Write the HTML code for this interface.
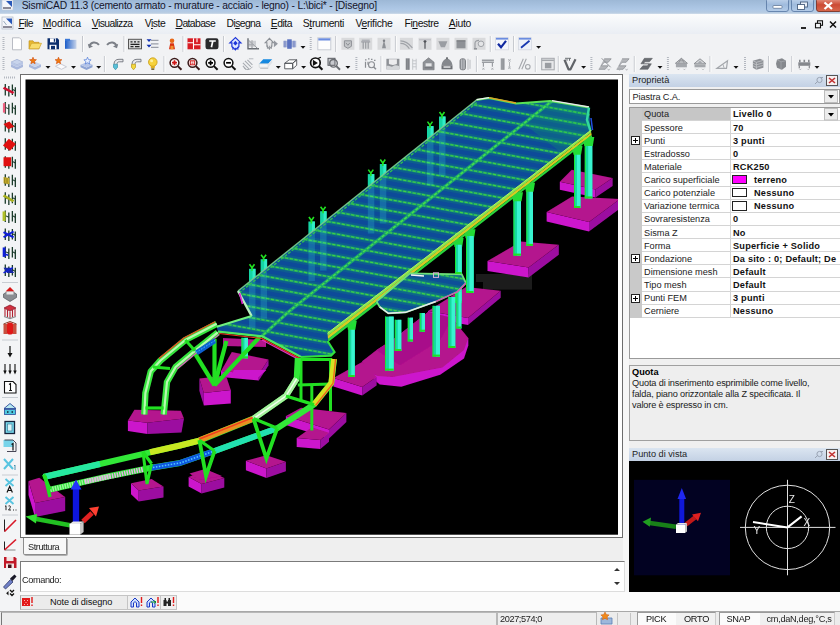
<!DOCTYPE html><html><head><meta charset="utf-8"><title>SismiCAD</title><style>
html,body{margin:0;padding:0;}
body{width:840px;height:625px;overflow:hidden;background:#f0f0f0;position:relative;font-family:"Liberation Sans",sans-serif;color:#000;}
.abs{position:absolute;}
.t{position:absolute;white-space:pre;line-height:1;}
#title{left:0;top:0;width:840px;height:13.5px;background:linear-gradient(#9db8d6 0%,#aec8e6 65%,#b6cbe2 88%,#cfdcea 100%);}
#menubar{left:0;top:13.5px;width:840px;height:21px;background:linear-gradient(#fbfcfd,#e9edf3);}
.m{position:absolute;top:19.2px;font-size:10.4px;white-space:pre;line-height:1;color:#111;}
.m u{text-decoration:underline;}
#tb{left:0;top:34px;width:840px;height:41px;background:#f1f2f4;}
#left{left:0;top:75px;width:20px;height:536px;background:#f3f4f6;}
#vp{left:20px;top:74px;width:603px;height:464px;background:#fff;border:1px solid #6d6d6d;box-sizing:border-box;}
#vpb{left:25.5px;top:79.5px;width:592.5px;height:555px;}
.pg{font-size:9.2px;}
</style></head><body>
<div id="title" class="abs"></div>
<div id="menubar" class="abs"></div>
<div class="t" style="left:21.7px;top:0.6px;font-size:10.3px;color:#14142a;letter-spacing:-0.202px">SismiCAD 11.3 (cemento armato - murature - acciaio - legno) - L:\bici* - [Disegno]</div>
<svg class="abs" style="left:0;top:0" width="840" height="34" viewBox="0 0 840 34"><rect x="2" y="0" width="11" height="10" fill="#f4f6fa" stroke="#c0c8d4" stroke-width="0.6"/><path d="M6 1h6v6z" fill="#2858b8"/><path d="M3 8h8" stroke="#445" stroke-width="1.2"/><rect x="2" y="17" width="11" height="12" fill="#f4f6fa" stroke="#b0b8c4" stroke-width="0.7"/><path d="M6 18.500h6v6z" fill="#2858b8"/><path d="M3.500 21l3 4" stroke="#9ab" stroke-width="1"/><path d="M3 27h9" stroke="#445" stroke-width="1.200"/><defs><linearGradient id="wb" x1="0" y1="0" x2="0" y2="1"><stop offset="0" stop-color="#c4d6ec"/><stop offset="0.5" stop-color="#9fbbdd"/><stop offset="1" stop-color="#b4cce8"/></linearGradient><linearGradient id="wc" x1="0" y1="0" x2="0" y2="1"><stop offset="0" stop-color="#e8a090"/><stop offset="0.5" stop-color="#cc4a34"/><stop offset="1" stop-color="#d8684c"/></linearGradient></defs><rect x="766.500" y="-2" width="22" height="13.500" rx="2.500" fill="url(#wb)" stroke="#5f7ea8" stroke-width="0.9"/><rect x="791.500" y="-2" width="22" height="13.500" rx="2.500" fill="url(#wb)" stroke="#5f7ea8" stroke-width="0.9"/><rect x="816.500" y="-2" width="25" height="13.500" rx="2.500" fill="url(#wc)" stroke="#7a3428" stroke-width="0.9"/><rect x="773" y="5.500" width="9" height="2.800" rx="0.800" fill="#fff" stroke="#556b8c" stroke-width="0.7"/><rect x="800.500" y="2" width="7" height="5" fill="#e8eef8" stroke="#4a607f" stroke-width="0.9"/><rect x="797.500" y="4.500" width="7" height="5" fill="#fff" stroke="#4a607f" stroke-width="0.9"/><path d="M824.500 2.500l7.500 6.500M832 2.500l-7.500 6.500" stroke="#fff" stroke-width="2.300"/><path d="M801 28h5" stroke="#111" stroke-width="1.800"/><rect x="817.500" y="20.800" width="5" height="4.500" fill="none" stroke="#111" stroke-width="1.100"/><rect x="815.500" y="23.300" width="5" height="4.500" fill="#f4f6f8" stroke="#111" stroke-width="1.100"/><path d="M830 21.500l6 6M836 21.500l-6 6" stroke="#111" stroke-width="1.500"/></svg>
<div class="m" style="left:18.4px;letter-spacing:-0.51px"><u>F</u>ile</div>
<div class="m" style="left:42.7px;letter-spacing:-0.04px"><u>M</u>odifica</div>
<div class="m" style="left:91.8px;letter-spacing:-0.59px"><u>V</u>isualizza</div>
<div class="m" style="left:144.8px;letter-spacing:-0.51px">V<u>i</u>ste</div>
<div class="m" style="left:175.5px;letter-spacing:-0.61px"><u>D</u>atabase</div>
<div class="m" style="left:226.6px;letter-spacing:-0.62px">Di<u>s</u>egna</div>
<div class="m" style="left:270.8px;letter-spacing:-0.50px"><u>E</u>dita</div>
<div class="m" style="left:302.8px;letter-spacing:-0.37px">S<u>t</u>rumenti</div>
<div class="m" style="left:355.4px;letter-spacing:-0.30px">V<u>e</u>rifiche</div>
<div class="m" style="left:404.6px;letter-spacing:-0.46px">Fi<u>n</u>estre</div>
<div class="m" style="left:448.8px;letter-spacing:-0.30px"><u>A</u>iuto</div>
<div id="tb" class="abs"></div>
<svg class="abs" style="left:0;top:0" width="840" height="78" viewBox="0 0 840 78"><path d="M3.5 37V51" stroke="#b4b8c0" stroke-width="2" stroke-dasharray="1 1"/><g transform="translate(10.0,36.8)"><path d="M2.5 1h7l2 2v10h-9z" fill="#fff" stroke="#b9bcc4" stroke-width="1"/></g><g transform="translate(28.0,36.8)"><path d="M1 4h4l1 1.500h5V12H1z" fill="#e8b830" stroke="#b88a18" stroke-width="0.6"/><path d="M1 12l2.500-5.500h10L11 12z" fill="#f8dc6c" stroke="#c89a20" stroke-width="0.6"/></g><g transform="translate(46.0,36.8)"><path d="M1.500 1.500h10l1.500 1.500v9.500h-11.500z" fill="#0c2f6e"/><rect x="4" y="1.500" width="6" height="4" fill="#fff"/><rect x="7.800" y="2" width="1.400" height="3" fill="#0c2f6e"/><rect x="3.500" y="8" width="7" height="4.500" fill="#fff"/><rect x="5" y="9" width="4" height="3.500" fill="#0c2f6e"/></g><g transform="translate(63.5,36.8)"><defs><linearGradient id="gs" x1="0" x2="1"><stop offset="0" stop-color="#1a5cc8"/><stop offset="1" stop-color="#c8d4ea"/></linearGradient></defs><rect x="1.500" y="3" width="11.500" height="9" fill="url(#gs)"/><rect x="1.500" y="2" width="5" height="2" fill="#3a78d8"/></g><path d="M82.5 36V52" stroke="#c3c6cc" stroke-width="1"/><path d="M83.5 36V52" stroke="#fcfcfc" stroke-width="1"/><g transform="translate(87.0,36.8)"><path d="M2.500 9.500C3.500 5 9 4.500 12 8" fill="none" stroke="#7c8088" stroke-width="2"/><path d="M0.800 7l1.200 4.500 4-1.800z" fill="#7c8088"/></g><g transform="translate(105.0,36.8)"><path d="M11.500 9.500C10.500 5 5 4.500 2 8" fill="none" stroke="#7c8088" stroke-width="2"/><path d="M13.200 7l-1.200 4.500-4-1.800z" fill="#7c8088"/></g><path d="M124 36V52" stroke="#c3c6cc" stroke-width="1"/><path d="M125 36V52" stroke="#fcfcfc" stroke-width="1"/><g transform="translate(128.0,36.8)"><rect x="0.500" y="2.500" width="13" height="9.500" fill="#d8d8d8" stroke="#555" stroke-width="1"/><path d="M2.500 5h2M6 5h2M9.500 5h2M2.500 7.500h9M2.500 9.800h3M7 9.800h4.500" stroke="#222" stroke-width="1.300"/></g><g transform="translate(145.5,36.8)"><path d="M5.500 3.500h7.500M5.500 7h7.500M5.500 10.500h7.500" stroke="#9a9ea8" stroke-width="1.200"/><path d="M1 2.500h5l-2.500 2.600z M1 8h5l-2.500 2.600z" fill="#1030b0"/></g><g transform="translate(165.0,36.8)"><path d="M4 12.500l1.200-6h3.600l1.200 6z" fill="#d83010"/><circle cx="7" cy="4" r="2.300" fill="#e86818"/><path d="M5.500 9h3v3.500h-3z" fill="#f09030"/></g><path d="M183 36V52" stroke="#c3c6cc" stroke-width="1"/><path d="M184 36V52" stroke="#fcfcfc" stroke-width="1"/><g transform="translate(187.0,36.8)"><rect x="0.500" y="1.500" width="13" height="11" fill="#d81c24"/><path d="M6.500 1.500v11M0.500 6h6M7 8h6.500M10 1.500v4" stroke="#fff" stroke-width="1.100"/></g><g transform="translate(205.0,36.8)"><rect x="0.500" y="1.500" width="13" height="11" rx="2.200" fill="#2a2a2c"/><path d="M4.200 4.200h6.600M7.800 4.200L6.400 10.500" stroke="#fff" stroke-width="1.700" fill="none"/></g><path d="M223.6 36V52" stroke="#c3c6cc" stroke-width="1"/><path d="M224.6 36V52" stroke="#fcfcfc" stroke-width="1"/><g transform="translate(228.4,36.8)"><path d="M7 0.800L1.500 6l2 0V10l3.500 3 3.500-3V6h2z" fill="#dfe8ff" stroke="#1c34d8" stroke-width="1.200"/><path d="M7 4l-2.200 2.400L7 8.800l2.200-2.400z" fill="#1c34d8"/><path d="M4.500 10v3M7 11v2.500M9.500 10v3" stroke="#1c34d8" stroke-width="1"/></g><g transform="translate(246.0,36.8)"><path d="M2 1.500V12h11" fill="none" stroke="#6a6e74" stroke-width="1.400"/><path d="M2 3l9.500 8.500M2 8h6M6 3.500v8" stroke="#8a8e94" stroke-width="1"/><rect x="3" y="4" width="7" height="6" fill="#b5b8bd" opacity="0.600"/></g><g transform="translate(264.4,36.8)"><path d="M5 1.500L0.800 6h1.700v3.500L5 12l2.500-2.500V6h1.700z" fill="#e8e8ea" stroke="#8c9096" stroke-width="1.100"/><path d="M5 9v4M3 8.500v3.500M7 8.500v3.500" stroke="#8c9096" stroke-width="0.900"/><path d="M9.500 3.500l4 3.500-4 3.500z" fill="#9498a0"/></g><g transform="translate(282.7,36.8)"><rect x="0.500" y="4" width="13" height="6.500" fill="#a9b4d8"/><rect x="4.500" y="2.500" width="4.500" height="9.500" fill="#5a72c0"/><rect x="1.500" y="4" width="1.500" height="6.500" fill="#8090c8"/><rect x="10.500" y="4" width="1.500" height="6.500" fill="#8090c8"/></g><path d="M300.5 46h5l-2.5 2.8z" fill="#111"/><path d="M310.7 37V51" stroke="#b4b8c0" stroke-width="2" stroke-dasharray="1 1"/><g transform="translate(317.3,36.8)"><rect x="0.500" y="1" width="13" height="12" fill="#fdfdfd" stroke="#c8ccd4" stroke-width="1"/><rect x="1" y="1.500" width="12" height="2.200" fill="#6a8ce0"/></g><path d="M335.7 36V52" stroke="#c3c6cc" stroke-width="1"/><path d="M336.7 36V52" stroke="#fcfcfc" stroke-width="1"/><g transform="translate(340.9,36.8)"><rect x="0.500" y="1" width="13" height="12" fill="#d9dadc"/><path d="M3.500 4h7v5.500L7 11.500 3.500 9.500z" fill="#c4c6c9" stroke="#8e9196" stroke-width="1"/><path d="M5 6l2 2.500L9 6" stroke="#8e9196" fill="none"/></g><g transform="translate(358.7,36.8)"><rect x="0.500" y="1" width="13" height="12" fill="#d9dadc"/><path d="M2.500 5h9M4.500 5v7M9.500 5v7M7 5v7" stroke="#9a9da2" stroke-width="1.200"/><path d="M3 3.500h8" stroke="#aeb1b6" stroke-width="1.500"/></g><g transform="translate(377.0,36.8)"><rect x="0.500" y="1" width="13" height="12" fill="#d9dadc"/><path d="M7 3l-2 8.500h4z" fill="#8e9196"/><circle cx="7" cy="4" r="1.200" fill="#7e8186"/></g><path d="M395.4 36V52" stroke="#c3c6cc" stroke-width="1"/><path d="M396.4 36V52" stroke="#fcfcfc" stroke-width="1"/><g transform="translate(399.4,36.8)"><rect x="0.500" y="1" width="13" height="12" fill="#d9dadc"/><path d="M1 4c5 0 8 2 12 7M1 6.500c4 0 7 2 9 5.500" stroke="#a0a3a8" stroke-width="1.200" fill="none"/></g><g transform="translate(418.0,36.8)"><rect x="0.500" y="1" width="13" height="12" fill="#d9dadc"/><path d="M7 4v8" stroke="#505358" stroke-width="1.200"/><circle cx="7" cy="4.500" r="1.400" fill="#505358"/><path d="M1 3h12" stroke="#bbbdc2" stroke-width="1"/></g><g transform="translate(435.9,36.8)"><rect x="0.500" y="1" width="13" height="12" fill="#d9dadc"/><path d="M2.500 4.500h9L9 10.500H5z" fill="#9a9da2"/></g><g transform="translate(454.0,36.8)"><rect x="0.500" y="1" width="13" height="12" fill="#d9dadc"/><rect x="2.500" y="4" width="9" height="7.500" fill="#8e9196"/><path d="M2.500 4h9" stroke="#6e7176" stroke-width="1"/></g><g transform="translate(472.0,36.8)"><rect x="0.500" y="1" width="13" height="12" fill="#d9dadc"/><circle cx="9" cy="7" r="2.800" fill="#e4e5e7" stroke="#a0a3a8"/><path d="M3 12V6.500c0-2 2-3 4-3" stroke="#9a9da2" stroke-width="1.200" fill="none"/><path d="M2 12h3" stroke="#8e9196" stroke-width="1.500"/></g><path d="M490.3 36V52" stroke="#c3c6cc" stroke-width="1"/><path d="M491.3 36V52" stroke="#fcfcfc" stroke-width="1"/><g transform="translate(495.0,36.8)"><rect x="0.500" y="1" width="13" height="12" fill="#f4f6fb" stroke="#d4d8e0" stroke-width="0.800"/><rect x="1" y="1" width="12" height="1.800" fill="#6a8ce0"/><path d="M3 7l3 3.500 5-6.500" stroke="#1028a0" stroke-width="2.200" fill="none"/></g><path d="M513.6 36V52" stroke="#c3c6cc" stroke-width="1"/><path d="M514.6 36V52" stroke="#fcfcfc" stroke-width="1"/><g transform="translate(518.0,36.8)"><rect x="0.500" y="1" width="13" height="12" fill="#eef1f8" stroke="#d4d8e0" stroke-width="0.800"/><rect x="1" y="1" width="12" height="1.800" fill="#6a8ce0"/><path d="M3 11l8.500-7" stroke="#1838b0" stroke-width="1.800"/></g><path d="M536.1 46h5l-2.5 2.8z" fill="#111"/><path d="M3.5 57V71" stroke="#b4b8c0" stroke-width="2" stroke-dasharray="1 1"/><g transform="translate(10.0,56.8)"><path d="M7 2.500l6 2.800-6 2.800-6-2.800z" fill="#c8d4ec" stroke="#98a8cc" stroke-width="0.600"/><path d="M1 7.500l6 2.800 6-2.800v2.700L7 13 1 10.200z" fill="#a9b8dc"/><path d="M1 5.300v2.200l6 2.800 6-2.800V5.300L7 8.100z" fill="#b8c6e6"/></g><g transform="translate(28.0,56.8)"><path d="M1 7.500l6 2.800 6-2.800v2.700L7 13 1 10.200z" fill="#a9b8dc"/><path d="M7 5l6 2.500-6 2.800-6-2.800z" fill="#c8d4ec"/><polygon points="5.00,0.40 5.95,2.69 8.42,2.89 6.54,4.50 7.12,6.91 5.00,5.62 2.88,6.91 3.46,4.50 1.58,2.89 4.05,2.69" fill="#f07a10" stroke="#d04a08" stroke-width="0.600"/></g><path d="M45.5 66h5l-2.5 2.8z" fill="#111"/><g transform="translate(53.5,56.8)"><path d="M2 9.500l5-2.500 6 3-5 2.500z" fill="#fbfbfd" stroke="#b4b8c4" stroke-width="0.700"/><polygon points="5.00,0.40 5.95,2.69 8.42,2.89 6.54,4.50 7.12,6.91 5.00,5.62 2.88,6.91 3.46,4.50 1.58,2.89 4.05,2.69" fill="#f07a10" stroke="#d04a08" stroke-width="0.600"/></g><path d="M71.0 66h5l-2.5 2.8z" fill="#111"/><g transform="translate(79.5,56.8)"><path d="M1 8l6 2.800 6-2.800v2.500L7 13.300 1 10.500z" fill="#8ea4d4"/><path d="M7 5.500l6 2.500-6 2.800L1 8z" fill="#b4c4e8"/><polygon points="8.00,0.40 9.01,2.82 11.61,3.03 9.63,4.73 10.23,7.27 8.00,5.91 5.77,7.27 6.37,4.73 4.39,3.03 6.99,2.82" fill="#e8f0ff" stroke="#3a6ad0" stroke-width="0.600"/></g><path d="M96.2 66h5l-2.5 2.8z" fill="#111"/><path d="M104.4 56V72" stroke="#c3c6cc" stroke-width="1"/><path d="M105.4 56V72" stroke="#fcfcfc" stroke-width="1"/><g transform="translate(110.0,56.8)"><path d="M4 7.500C4 4 6 2.500 9 2.500h4V5H9.500C7.500 5 7 6 7 7.500" fill="#e8e8ec" stroke="#70747c" stroke-width="0.900"/><path d="M3.500 7.500h4v3l-2 2.500-2-2.500z" fill="#58c0d8" stroke="#3890a8" stroke-width="0.700"/></g><g transform="translate(128.0,56.8)"><path d="M4 7.500C4 4 6 2.500 9 2.500h4V5H9.500C7.500 5 7 6 7 7.500" fill="#e8e8ec" stroke="#70747c" stroke-width="0.900"/><path d="M3.500 7.500h4v3l-2 2.500-2-2.500z" fill="#f4d840" stroke="#b89818" stroke-width="0.700"/></g><g transform="translate(145.8,56.8)"><circle cx="7" cy="5.300" r="4.300" fill="#f6d23c" stroke="#c89c14" stroke-width="0.800"/><path d="M5 9h4v2.500H5z" fill="#e0b020"/><path d="M5.500 11.500h3v1.700h-3z" fill="#7a6a3a"/><circle cx="5.800" cy="4" r="1.500" fill="#fdf0a0"/></g><path d="M164 56V72" stroke="#c3c6cc" stroke-width="1"/><path d="M165 56V72" stroke="#fcfcfc" stroke-width="1"/><g transform="translate(168.5,56.8)"><circle cx="6" cy="6" r="4.400" fill="#fff" stroke="#3a1a1a" stroke-width="1.500"/><path d="M9.300 9.300l3.700 3.700" stroke="#3a1a1a" stroke-width="2"/><path d="M6 3.500v5M3.500 6h5" stroke="#d01818" stroke-width="1.600"/><path d="M4 4l4 4M8 4L4 8" stroke="#d01818" stroke-width="0.700"/></g><g transform="translate(186.5,56.8)"><circle cx="6" cy="6" r="4.400" fill="#fff" stroke="#3a1a1a" stroke-width="1.500"/><path d="M9.300 9.300l3.700 3.700" stroke="#3a1a1a" stroke-width="2"/><rect x="3.800" y="4" width="4.400" height="4" fill="none" stroke="#d01818" stroke-width="1"/><path d="M5 5.200h2M5 6.800h2" stroke="#d01818" stroke-width="0.700"/></g><g transform="translate(204.6,56.8)"><circle cx="6" cy="6" r="4.400" fill="#fff" stroke="#111" stroke-width="1.500"/><path d="M9.300 9.300l3.700 3.700" stroke="#111" stroke-width="2"/><path d="M6 3.600v4.800M3.600 6h4.800" stroke="#000" stroke-width="1.700"/></g><g transform="translate(222.5,56.8)"><circle cx="6" cy="6" r="4.400" fill="#fff" stroke="#111" stroke-width="1.500"/><path d="M9.300 9.300l3.700 3.700" stroke="#111" stroke-width="2"/><path d="M3.600 6h4.800" stroke="#000" stroke-width="1.700"/></g><g transform="translate(240.9,56.8)"><path d="M2 6l6 6M4 4l6 6M6.500 3l5 5M2 9l3 3.500" stroke="#a8acb2" stroke-width="1.100" fill="none"/><path d="M8 2h4.500" stroke="#b4b8be" stroke-width="1"/><path d="M3 11c2 2.500 6 2.500 8.500-1" stroke="#a8acb2" stroke-width="1" fill="none"/></g><g transform="translate(258.7,56.8)"><path d="M4.500 2.500h9L9.500 7h-9z" fill="#1488e0"/><path d="M0.500 7h9v3.500h-9z" fill="#f4f6f8" stroke="#c4c8cc" stroke-width="0.500"/><path d="M9.500 7l4-4.500v3.500l-4 4.500z" fill="#dfe3e8"/><path d="M1.500 11.500h8" stroke="#b8bcc2" stroke-width="1"/></g><path d="M275.8 66h5l-2.5 2.8z" fill="#111"/><g transform="translate(283.7,56.8)"><path d="M1 6.500l4.500-3.500h7.500L9 6.500z M1 6.500h8v5.500H1z M9 6.500l4-3.500v5.500l-4 3.500z" fill="#fff" stroke="#505458" stroke-width="0.900" stroke-linejoin="round"/></g><path d="M301.1 66h5l-2.5 2.8z" fill="#111"/><g transform="translate(309.4,56.8)"><circle cx="6" cy="6" r="4.800" fill="#fff" stroke="#111" stroke-width="1.700"/><path d="M9.500 9.500l3.500 3.500" stroke="#111" stroke-width="2.200"/><path d="M3.500 3l5 3.200-5 3z" fill="#111"/><path d="M8 2l3.500-1.500" stroke="#111" stroke-width="1.200"/></g><g transform="translate(327.0,56.8)"><rect x="1" y="1.500" width="7" height="7" fill="#c8cacf" stroke="#5a5d62" stroke-width="1"/><circle cx="6.500" cy="6.500" r="3.800" fill="none" stroke="#6a6d72" stroke-width="1.400"/><path d="M9.300 9.300l3.700 3.700" stroke="#6a6d72" stroke-width="2"/></g><path d="M345.4 66h5l-2.5 2.8z" fill="#111"/><path d="M356.4 57V71" stroke="#b4b8c0" stroke-width="2" stroke-dasharray="1 1"/><g transform="translate(363.0,56.8)"><path d="M2 3h1.500M5 2h1.500M8 2.500h1.500M11 3.500h1.500" stroke="#8a8d92" stroke-width="1.300"/><path d="M2.500 5v6M5 5v3" stroke="#8a8d92" stroke-width="1.200"/><circle cx="8.500" cy="8" r="3" fill="#f0f0f2" stroke="#8a8d92" stroke-width="1.100"/><path d="M10.700 10.200l2.300 2.300" stroke="#8a8d92" stroke-width="1.500"/></g><path d="M381 56V72" stroke="#c3c6cc" stroke-width="1"/><path d="M382 56V72" stroke="#fcfcfc" stroke-width="1"/><g transform="translate(385.9,56.8)"><rect x="0.500" y="2" width="13" height="10.500" fill="#8e9196"/><path d="M3 2.500h8v4.500c-1.500 1.500-6.500 1.500-8 0z" fill="#ececee"/><path d="M0.500 9.500c3-1.500 5 1.500 6.500 0s4-1 6.500 0v3h-13z" fill="#d4d6d9"/></g><g transform="translate(403.7,56.8)"><rect x="2" y="1.500" width="4" height="11.500" fill="#8e9196"/><path d="M3 2v11M5 2v11" stroke="#6e7176" stroke-width="0.500"/><path d="M9 2v11M12.500 2v11M9 4h3.500M9 7h3.500M9 10h3.500" stroke="#c0c2c6" stroke-width="0.900"/></g><g transform="translate(421.6,56.8)"><path d="M7 1L1.500 5.500V13h11V5.500z" fill="#8e9196" stroke="#6e7176" stroke-width="0.600"/><rect x="4" y="6.500" width="6" height="3" fill="#e4e5e7"/><path d="M3 11h8" stroke="#6e7176" stroke-width="1"/></g><g transform="translate(440.0,56.8)"><path d="M7 1.500c-3 1-5 3.500-5.500 7h11c-.5-3.500-2.500-6-5.500-7z" fill="#85888d"/><rect x="1.500" y="8.500" width="11" height="4" fill="#6e7176"/><rect x="3.500" y="9.500" width="7" height="1.500" fill="#e4e5e7"/><rect x="6" y="0.500" width="2" height="2" fill="#6e7176"/></g><g transform="translate(457.0,56.8)"><rect x="3" y="2" width="5.500" height="11" rx="2" fill="#9a9da2" stroke="#6e7176" stroke-width="0.800"/><path d="M4.500 2.500v10M7 2.500v10" stroke="#c8cacf" stroke-width="0.700"/><path d="M11 2v11M13 3v9" stroke="#b4b6ba" stroke-width="0.900"/></g><path d="M476.4 56V72" stroke="#c3c6cc" stroke-width="1"/><path d="M477.4 56V72" stroke="#fcfcfc" stroke-width="1"/><g transform="translate(480.9,56.8)"><path d="M1 3.500h12M1 5.500h12" stroke="#9a9da2" stroke-width="1.500"/><path d="M2.500 6v4M11.500 6v4" stroke="#9a9da2" stroke-width="1.200"/><path d="M1.500 11l2 2M3.500 11l-2 2M10.500 11l2 2M12.500 11l-2 2" stroke="#a8abb0" stroke-width="0.900"/></g><g transform="translate(498.7,56.8)"><rect x="2" y="1.500" width="4" height="11.500" fill="#a4a7ac"/><path d="M3.300 2v11M4.700 2v11" stroke="#7e8186" stroke-width="0.500"/><path d="M9.500 2.500l2.500 2M12 2.500l-2.500 2M9.500 10l2.500 2M12 10l-2.500 2M10.800 5v5" stroke="#a8abb0" stroke-width="0.900"/></g><g transform="translate(517.3,56.8)"><path d="M1.500 12.500L6 2M4.500 12.500L9 2" stroke="#a4a7ac" stroke-width="1.100"/><circle cx="10.500" cy="10" r="2.300" fill="none" stroke="#a4a7ac" stroke-width="1.100"/></g><path d="M535.3 56V72" stroke="#c3c6cc" stroke-width="1"/><path d="M536.3 56V72" stroke="#fcfcfc" stroke-width="1"/><g transform="translate(540.9,56.8)"><rect x="0.800" y="1.500" width="12.500" height="11.500" fill="#e8e9eb" stroke="#a4a7ac" stroke-width="1"/><path d="M1 3.500h12" stroke="#a4a7ac" stroke-width="1.500"/><rect x="4" y="6" width="6.500" height="5.500" fill="#9a9da2"/></g><path d="M558.3 56V72" stroke="#c3c6cc" stroke-width="1"/><path d="M559.3 56V72" stroke="#fcfcfc" stroke-width="1"/><g transform="translate(563.0,56.8)"><path d="M1.500 3l4 9.500h2L12.500 2.500" stroke="#606368" stroke-width="2.200" fill="none" stroke-linejoin="round"/><path d="M4 2v2M6.500 1.500v2.500M2 1.500h6" stroke="#606368" stroke-width="0.900"/></g><path d="M581.1 66h5l-2.5 2.8z" fill="#111"/><path d="M591.4 57V71" stroke="#b4b8c0" stroke-width="2" stroke-dasharray="1 1"/><g transform="translate(598.7,56.8)"><path d="M5.500 2h7l-3 3.500h-4l-3 3.500h7l-3 3.500h-6.500" fill="#b4b6ba" stroke="#8e9196" stroke-width="0.800"/><path d="M3 1.500l9 9" stroke="#8e9196" stroke-width="1"/><path d="M9 12l1 1.500 1-1.500" stroke="#a8abb0" stroke-width="0.800" fill="none"/></g><g transform="translate(616.6,56.8)"><path d="M5.500 2h7l-3 3.500h-4l-3 3.500h7l-3 3.500h-6.500" fill="#b4b6ba" stroke="#8e9196" stroke-width="0.800"/><path d="M2 12l1 1.500 1-1.500M9 12l1 1.500 1-1.500" stroke="#a8abb0" stroke-width="0.800" fill="none"/></g><path d="M634.3 56V72" stroke="#c3c6cc" stroke-width="1"/><path d="M635.3 56V72" stroke="#fcfcfc" stroke-width="1"/><g transform="translate(639.4,56.8)"><path d="M5 1.500h8L10 5H5.500l-1.500 2h8l-3.500 5.500H0.500L3.500 9H8L9.500 7H1.500z" fill="#6a6d72" stroke="#55585d" stroke-width="0.500"/></g><path d="M657.5 66h5l-2.5 2.8z" fill="#111"/><path d="M667.9 57V71" stroke="#b4b8c0" stroke-width="2" stroke-dasharray="1 1"/><g transform="translate(674.4,56.8)"><path d="M7 1.500L1 6.500h12z" fill="#c4c6c9" stroke="#8e9196" stroke-width="1"/><path d="M4 4l6 0M7 1.500L4 6.500M7 1.500l3 5" stroke="#8e9196" stroke-width="0.800"/><rect x="1.500" y="7" width="11" height="3.500" fill="#a4a7ac"/><path d="M3 12l1 1 1-1M9 12l1 1 1-1" stroke="#a8abb0" stroke-width="0.800" fill="none"/></g><g transform="translate(693.0,56.8)"><path d="M7 2L1 7h12z" fill="#d4d6d9" stroke="#8e9196" stroke-width="1"/><path d="M7 4l-3 3h6z" fill="#a4a7ac"/><rect x="1.500" y="7.500" width="11" height="3" fill="#a4a7ac"/><path d="M3 12l1 1 1-1M9 12l1 1 1-1" stroke="#a8abb0" stroke-width="0.800" fill="none"/></g><path d="M710 56V72" stroke="#c3c6cc" stroke-width="1"/><path d="M711 56V72" stroke="#fcfcfc" stroke-width="1"/><g transform="translate(716.0,56.8)"><path d="M1 11.500L11.500 4l-1 7.500z" fill="none" stroke="#a4a7ac" stroke-width="1.200"/><path d="M7 7.500l1 3.500" stroke="#a4a7ac" stroke-width="0.900"/></g><path d="M733.5 66h5l-2.5 2.8z" fill="#111"/><path d="M745 57V71" stroke="#b4b8c0" stroke-width="2" stroke-dasharray="1 1"/><g transform="translate(750.9,56.8)"><path d="M2 4l7-2 3.500 1.500v7.500L5.500 13 2 11z" fill="#8e9196"/><path d="M2 6.500l3.500 1.500 7-2M2 9l3.500 1.500 7-2M5.500 5.500V13M2 4l3.500 1.500 7-2" stroke="#c8cacf" stroke-width="0.700" fill="none"/></g><path d="M768.6 56V72" stroke="#c3c6cc" stroke-width="1"/><path d="M769.6 56V72" stroke="#fcfcfc" stroke-width="1"/><g transform="translate(774.0,56.8)"><path d="M3 3l5-1.500 4 2.500v6L8 13l-5-2-1-4z" fill="#85888d"/><path d="M3 3l4 2 5-1M7 5v8" stroke="#a8abb0" stroke-width="0.700" fill="none"/></g><path d="M791.8 56V72" stroke="#c3c6cc" stroke-width="1"/><path d="M792.8 56V72" stroke="#fcfcfc" stroke-width="1"/><g transform="translate(797.3,56.8)"><rect x="1" y="5.500" width="12" height="3.500" fill="#85888d"/><path d="M2.500 3v2.500M7 3v2.500M11.500 3v2.500" stroke="#85888d" stroke-width="1.600"/><path d="M2 9v2.500M12 9v2.500" stroke="#85888d" stroke-width="1.200"/><path d="M2 12l1 1 1-1M10 12l1 1 1-1" stroke="#a8abb0" stroke-width="0.800" fill="none"/></g><path d="M814.5 66h5l-2.5 2.8z" fill="#111"/></svg>
<div id="left" class="abs"></div>
<svg class="abs" style="left:0;top:0" width="22" height="612" viewBox="0 0 22 612"><path d="M4 77.500h12" stroke="#b4b8c0" stroke-width="2" stroke-dasharray="1 1"/><g transform="translate(-1.200,90.3) scale(1.180,1.050)"><path d="M5.500 -6v11M8.500 -4v10M11.500 -5.500v10M14 -3v9" stroke="#1a3a2a" stroke-width="1.100" fill="none"/><path d="M5.500 -1l3 1.500M11.500 -1l2.500 1.500" stroke="#1a3a2a" stroke-width="0.900"/><path d="M4 -2.500l8.500 5" stroke="#d01030" stroke-width="2.200"/></g><g transform="translate(-1.200,108.4) scale(1.180,1.050)"><path d="M5.500 -6v11M8.500 -4v10M11.500 -5.500v10M14 -3v9" stroke="#1a3a2a" stroke-width="1.100" fill="none"/><path d="M5.500 -1l3 1.500M11.500 -1l2.500 1.500" stroke="#1a3a2a" stroke-width="0.900"/><path d="M4.500 -5v9" stroke="#f06080" stroke-width="2"/></g><g transform="translate(-1.200,126.2) scale(1.180,1.050)"><path d="M5.500 -6v11M8.500 -4v10M11.500 -5.500v10M14 -3v9" stroke="#1a3a2a" stroke-width="1.100" fill="none"/><path d="M5.500 -1l3 1.500M11.500 -1l2.500 1.500" stroke="#1a3a2a" stroke-width="0.900"/><path d="M4 -2l5-2.500 4 5-5 2.500z" fill="#d81010"/></g><g transform="translate(-1.200,144.5) scale(1.180,1.050)"><path d="M5.500 -6v11M8.500 -4v10M11.500 -5.500v10M14 -3v9" stroke="#1a3a2a" stroke-width="1.100" fill="none"/><path d="M5.500 -1l3 1.500M11.500 -1l2.500 1.500" stroke="#1a3a2a" stroke-width="0.900"/><path d="M3.500 1l5-6.500 6 5-5 6.500z" fill="#e01010"/></g><g transform="translate(-1.200,162.5) scale(1.180,1.050)"><path d="M5.500 -6v11M8.500 -4v10M11.500 -5.500v10M14 -3v9" stroke="#1a3a2a" stroke-width="1.100" fill="none"/><path d="M5.500 -1l3 1.500M11.500 -1l2.500 1.500" stroke="#1a3a2a" stroke-width="0.900"/><path d="M4 -5h6.500v8.500H4z" fill="#e01010"/></g><g transform="translate(-1.200,180.6) scale(1.180,1.050)"><path d="M5.500 -6v11M8.500 -4v10M11.500 -5.500v10M14 -3v9" stroke="#1a3a2a" stroke-width="1.100" fill="none"/><path d="M5.500 -1l3 1.500M11.500 -1l2.500 1.500" stroke="#1a3a2a" stroke-width="0.900"/><path d="M4 -3.500l5 1v6l-5-1z" fill="#c8b030"/><path d="M5 -3v6M7 -2.500v6" stroke="#7a6a10" stroke-width="0.600"/></g><g transform="translate(-1.200,198.6) scale(1.180,1.050)"><path d="M5.500 -6v11M8.500 -4v10M11.500 -5.500v10M14 -3v9" stroke="#1a3a2a" stroke-width="1.100" fill="none"/><path d="M5.500 -1l3 1.500M11.500 -1l2.500 1.500" stroke="#1a3a2a" stroke-width="0.900"/><path d="M4 -3l8.500 5.500" stroke="#a8b020" stroke-width="2.400"/></g><g transform="translate(-1.200,216.7) scale(1.180,1.050)"><path d="M5.500 -6v11M8.500 -4v10M11.500 -5.500v10M14 -3v9" stroke="#1a3a2a" stroke-width="1.100" fill="none"/><path d="M5.500 -1l3 1.500M11.500 -1l2.500 1.500" stroke="#1a3a2a" stroke-width="0.900"/><path d="M4.500 -5v9" stroke="#b0c028" stroke-width="2.600"/></g><g transform="translate(-1.200,234.7) scale(1.180,1.050)"><path d="M5.500 -6v11M8.500 -4v10M11.500 -5.500v10M14 -3v9" stroke="#1a3a2a" stroke-width="1.100" fill="none"/><path d="M5.500 -1l3 1.500M11.500 -1l2.500 1.500" stroke="#1a3a2a" stroke-width="0.900"/><path d="M4 2.500l8.500-5.500M4 -2.500l8.500 5" stroke="#1020d8" stroke-width="1.800"/></g><g transform="translate(-1.200,252.7) scale(1.180,1.050)"><path d="M5.500 -6v11M8.500 -4v10M11.500 -5.500v10M14 -3v9" stroke="#1a3a2a" stroke-width="1.100" fill="none"/><path d="M5.500 -1l3 1.500M11.500 -1l2.500 1.500" stroke="#1a3a2a" stroke-width="0.900"/><path d="M4.500 -5v9" stroke="#1020d8" stroke-width="2.400"/><path d="M4 1l4 1.500" stroke="#1020d8" stroke-width="1.500"/></g><g transform="translate(-1.200,270.8) scale(1.180,1.050)"><path d="M5.500 -6v11M8.500 -4v10M11.500 -5.500v10M14 -3v9" stroke="#1a3a2a" stroke-width="1.100" fill="none"/><path d="M5.500 -1l3 1.500M11.500 -1l2.500 1.500" stroke="#1a3a2a" stroke-width="0.900"/><path d="M4 -3l6 0l3 5h-6z" fill="#1828a8"/><path d="M4 2l8-5" stroke="#1020d8" stroke-width="1.200"/></g><path d="M2 282.5h16" stroke="#c8ccd2" stroke-width="1"/><g transform="translate(0,293)"><path d="M3.500 1l6.500-4 6.500 4v3.500L10 8.500 3.500 4.500z" fill="#8a8d92" stroke="#55585d" stroke-width="0.700"/><path d="M10 -6l4.500 4.500h-9z" fill="#d81818"/><path d="M6.500 -1.500h7v3h-7z" fill="#e8e8ea"/></g><g transform="translate(0,311)"><path d="M4 -3l6-3 6 3-6 3z" fill="#d03040" stroke="#801020" stroke-width="0.700"/><path d="M5 -2.500v8M15 -2.500v8M10 0.500v7M7.500 -1v7M12.500 -1v7" stroke="#b02030" stroke-width="1.100"/><path d="M4 5.500l6 2 6-2" stroke="#8a8d92" stroke-width="1.200" fill="none"/></g><g transform="translate(0,328)"><rect x="3.500" y="-4" width="4" height="10" fill="#c85040"/><rect x="12.500" y="-4" width="4" height="10" fill="#c85040"/><rect x="7" y="-5.500" width="6" height="12" rx="2" fill="#e01818"/><path d="M3.500 -4l6.500-2.500 6.500 2.500" stroke="#8a4030" stroke-width="1" fill="none"/></g><path d="M2 340h16" stroke="#c8ccd2" stroke-width="1"/><g transform="translate(0,351.500)"><path d="M10 -5.500v8" stroke="#111" stroke-width="1.200"/><path d="M7.500 1.500h5L10 6z" fill="#111"/></g><g transform="translate(0,369)"><path d="M5 -5v7M10 -5v7M15 -5v7" stroke="#111" stroke-width="1.100"/><path d="M3.300 1.500h3.400L5 5.500zM8.300 1.500h3.400L10 5.500zM13.300 1.500h3.400L15 5.500z" fill="#111"/></g><g transform="translate(0,387)"><path d="M4.500 -5.500h8.500l3 3v8.500H4.500z" fill="#fff" stroke="#111" stroke-width="1.100"/><path d="M9 -2.500l1.500-1v7M9 3.500h3" stroke="#111" stroke-width="1.100" fill="none"/></g><path d="M2 397.5h16" stroke="#c8ccd2" stroke-width="1"/><g transform="translate(0,409)"><path d="M10 -5.500l-6 5h12z" fill="#b8e8f0" stroke="#2a4a9a" stroke-width="0.900"/><rect x="4.500" y="0.500" width="11" height="5" fill="#50c8e0" stroke="#2a4a9a" stroke-width="0.800"/><path d="M7 3h1.500M11.500 3h1.500" stroke="#123" stroke-width="1.300"/></g><g transform="translate(0,427.500)"><rect x="5" y="-6" width="9.500" height="12" fill="#7ad8ec" stroke="#15203a" stroke-width="1.300"/><rect x="7.500" y="-3.500" width="4.500" height="7" fill="#d8f4fa" stroke="#2a6a8a" stroke-width="0.600"/></g><g transform="translate(0,445.500)"><rect x="3.500" y="-5.500" width="10" height="7" fill="#78d4ea"/><path d="M4.500 -5.500h8.500l3 3v8.500H7" fill="none" stroke="#334" stroke-width="0.900"/><path d="M11.500 -1l1.500-1v7" stroke="#111" stroke-width="1.200" fill="none"/></g><g transform="translate(0,464)"><path d="M4 -5l9 10M13 -5L4 5" stroke="#58c4e0" stroke-width="2"/><path d="M14 2l1-1v5" stroke="#3a8aa8" stroke-width="0.900" fill="none"/></g><path d="M2 475h16" stroke="#c8ccd2" stroke-width="1"/><g transform="translate(0,486)"><path d="M5.500 -7l8 7M13.500 -7l-8 7" stroke="#58c4e0" stroke-width="1.900"/><path d="M7 6.500l2.700-6 2.700 6M8 4.500h3.500" stroke="#111" stroke-width="1.200" fill="none"/></g><g transform="translate(0,504)"><path d="M5.500 -7l8 7M13.500 -7l-8 7" stroke="#58c4e0" stroke-width="1.900"/><path d="M5 2.500l1-0.800v4.500M8.500 2c2.500-1 2.500 1.500 0 4h2.500M13 6h1M15.500 6h1" stroke="#111" stroke-width="0.900" fill="none"/></g><path d="M2 515h16" stroke="#c8ccd2" stroke-width="1"/><g transform="translate(0,525.500)"><path d="M4.500 -6v12" stroke="#222" stroke-width="1"/><path d="M4.500 6L16 -5.500" stroke="#d81828" stroke-width="1.600"/></g><g transform="translate(0,544.500)"><path d="M4.500 5.500h11" stroke="#888" stroke-width="1"/><path d="M4.500 -3v8.500" stroke="#222" stroke-width="1"/><path d="M4.500 5.500L16 -5" stroke="#d81828" stroke-width="1.600"/></g><g transform="translate(0,562.500)"><path d="M4 -5.500h11l1.500 1.500v9.500H4z" fill="#c01828"/><rect x="6.500" y="-5.500" width="7" height="4" fill="#f4e4e4"/><rect x="6" y="1" width="8" height="4.500" fill="#f4e4e4"/><rect x="8" y="2" width="3.500" height="3.500" fill="#401018"/></g><g transform="translate(0,581)"><path d="M3.500 6l7-7.500 2.500 2.500-7.500 7z" fill="#7080c8" stroke="#303868" stroke-width="0.800"/><path d="M10 -2.500l4.500-4 2 2-4 4.500z" fill="#181828"/></g><g transform="translate(0,593.500)"><path d="M8.500 -2.500l-2.300 2.300 2.300 2.300z" fill="#111"/><path d="M10 -3.500l2 2 2-2M10 0l2 2 2-2" stroke="#111" stroke-width="1.300" fill="none"/></g></svg>
<div class="abs" style="left:623px;top:75px;width:6px;height:536px;background:#f7f7f7"></div>
<div id="vp" class="abs"></div>
<svg class="abs" id="vps" style="left:0;top:0" width="840" height="625" viewBox="0 0 840 625"><defs><filter id="blr" x="0" y="0" width="840" height="625" filterUnits="userSpaceOnUse"><feGaussianBlur stdDeviation="0.55"/></filter><clipPath id="vpc"><rect x="25.5" y="79.5" width="592.5" height="455.2"/></clipPath></defs><rect x="25.5" y="79.5" width="592.5" height="455.2" fill="#000"/><g clip-path="url(#vpc)"><g filter="url(#blr)"><defs><clipPath id="cd"><polygon points="476.5,100.0 489.0,98.0 516.0,103.4 550.0,101.0 589.0,107.5 590.6,131.3 327.5,341.0 334.5,352.0 331.0,355.6 301.0,357.0 262.4,336.4 218.0,331.6 216.8,326.8 251.6,316.0 238.0,291.0"/></clipPath><clipPath id="cs"><polygon points="376.5,301.5 410.0,273.4 461.8,274.4 466.0,283.0 457.5,291.7 435.9,301.5 405.6,312.3 388.3,313.3 379.7,306.9"/></clipPath></defs><polygon points="476.0,274.0 532.0,274.0 532.0,289.5 483.0,289.5 483.0,282.0 476.0,282.0" fill="#1e1e1e" /><polygon points="559.8,181.7 595.5,189.6 595.5,197.6 559.8,189.7" fill="#cc14cc" /><polygon points="595.5,189.6 612.6,178.0 612.6,186.0 595.5,197.6" fill="#9c0ea0" /><polygon points="559.8,181.7 571.7,169.8 612.6,178.0 595.5,189.6" fill="#b4128e" /><polygon points="546.6,212.0 589.0,222.0 589.0,231.5 546.6,221.5" fill="#cc14cc" /><polygon points="589.0,222.0 620.0,199.0 620.0,208.5 589.0,231.5" fill="#9c0ea0" /><polygon points="546.6,212.0 572.0,196.5 620.0,199.0 589.0,222.0" fill="#b4128e" /><polygon points="487.5,261.0 528.6,267.5 528.6,277.5 487.5,271.0" fill="#cc14cc" /><polygon points="528.6,267.5 558.8,244.8 558.8,254.8 528.6,277.5" fill="#9c0ea0" /><polygon points="487.5,261.0 521.0,241.6 558.8,244.8 528.6,267.5" fill="#b4128e" /><polygon points="428.0,311.0 468.0,318.0 468.0,325.0 428.0,318.0" fill="#cc14cc" /><polygon points="468.0,318.0 500.7,290.7 500.7,297.7 468.0,325.0" fill="#9c0ea0" /><polygon points="428.0,311.0 466.0,287.0 500.7,290.7 468.0,318.0" fill="#b4128e" /><polygon points="574.0,148.0 580.5,148.0 580.5,208.0 574.0,208.0" fill="#14d8a0" /><polygon points="576.9,148.0 580.5,148.0 580.5,208.0 576.9,208.0" fill="#38f4d0" /><polyline points="574.5,148.0 574.5,208.0" fill="none" stroke="#18e838" stroke-width="1" /><polyline points="574.0,207.0 580.5,207.0" fill="none" stroke="#22e022" stroke-width="2" /><polygon points="584.8,140.0 592.3,140.0 592.3,198.4 584.8,198.4" fill="#14d8a0" /><polygon points="588.2,140.0 592.3,140.0 592.3,198.4 588.2,198.4" fill="#38f4d0" /><polyline points="585.3,140.0 585.3,198.4" fill="none" stroke="#18e838" stroke-width="1" /><polyline points="584.8,197.4 592.3,197.4" fill="none" stroke="#22e022" stroke-width="2" /><polygon points="513.5,198.4 521.0,198.4 521.0,255.6 513.5,255.6" fill="#14d8a0" /><polygon points="516.9,198.4 521.0,198.4 521.0,255.6 516.9,255.6" fill="#38f4d0" /><polyline points="514.0,198.4 514.0,255.6" fill="none" stroke="#18e838" stroke-width="1" /><polyline points="513.5,254.6 521.0,254.6" fill="none" stroke="#22e022" stroke-width="2" /><polygon points="526.4,189.7 533.0,189.7 533.0,245.9 526.4,245.9" fill="#14d8a0" /><polygon points="529.4,189.7 533.0,189.7 533.0,245.9 529.4,245.9" fill="#38f4d0" /><polyline points="526.9,189.7 526.9,245.9" fill="none" stroke="#18e838" stroke-width="1" /><polyline points="526.4,244.9 533.0,244.9" fill="none" stroke="#22e022" stroke-width="2" /><polygon points="455.0,244.8 461.6,244.8 461.6,303.0 455.0,303.0" fill="#14d8a0" /><polygon points="458.0,244.8 461.6,244.8 461.6,303.0 458.0,303.0" fill="#38f4d0" /><polyline points="455.5,244.8 455.5,303.0" fill="none" stroke="#18e838" stroke-width="1" /><polyline points="455.0,302.0 461.6,302.0" fill="none" stroke="#22e022" stroke-width="2" /><polygon points="466.0,236.0 473.5,236.0 473.5,293.0 466.0,293.0" fill="#14d8a0" /><polygon points="469.4,236.0 473.5,236.0 473.5,293.0 469.4,293.0" fill="#38f4d0" /><polyline points="466.5,236.0 466.5,293.0" fill="none" stroke="#18e838" stroke-width="1" /><polyline points="466.0,292.0 473.5,292.0" fill="none" stroke="#22e022" stroke-width="2" /><polygon points="427.0,126.1 433.5,126.1 433.5,140.1 427.0,140.1" fill="#16d4a4" /><polygon points="430.5,126.1 433.5,126.1 433.5,140.1 430.5,140.1" fill="#30ecc8" /><polyline points="427.5,121.6 430.0,125.1 432.5,121.6" fill="none" stroke="#22e022" stroke-width="1.6" /><polyline points="430.0,125.1 430.0,128.1" fill="none" stroke="#22e022" stroke-width="1.6" /><polygon points="439.0,116.5 445.5,116.5 445.5,130.5 439.0,130.5" fill="#16d4a4" /><polygon points="442.5,116.5 445.5,116.5 445.5,130.5 442.5,130.5" fill="#30ecc8" /><polyline points="439.5,112.0 442.0,115.5 444.5,112.0" fill="none" stroke="#22e022" stroke-width="1.6" /><polyline points="442.0,115.5 442.0,118.5" fill="none" stroke="#22e022" stroke-width="1.6" /><polygon points="367.8,174.1 374.3,174.1 374.3,188.1 367.8,188.1" fill="#16d4a4" /><polygon points="371.3,174.1 374.3,174.1 374.3,188.1 371.3,188.1" fill="#30ecc8" /><polyline points="368.3,169.6 370.8,173.1 373.3,169.6" fill="none" stroke="#22e022" stroke-width="1.6" /><polyline points="370.8,173.1 370.8,176.1" fill="none" stroke="#22e022" stroke-width="1.6" /><polygon points="379.8,164.0 386.3,164.0 386.3,178.0 379.8,178.0" fill="#16d4a4" /><polygon points="383.3,164.0 386.3,164.0 386.3,178.0 383.3,178.0" fill="#30ecc8" /><polyline points="380.3,159.5 382.8,163.0 385.3,159.5" fill="none" stroke="#22e022" stroke-width="1.6" /><polyline points="382.8,163.0 382.8,166.0" fill="none" stroke="#22e022" stroke-width="1.6" /><polygon points="308.4,221.5 314.9,221.5 314.9,235.5 308.4,235.5" fill="#16d4a4" /><polygon points="311.9,221.5 314.9,221.5 314.9,235.5 311.9,235.5" fill="#30ecc8" /><polyline points="308.9,217.0 311.4,220.5 313.9,217.0" fill="none" stroke="#22e022" stroke-width="1.6" /><polyline points="311.4,220.5 311.4,223.5" fill="none" stroke="#22e022" stroke-width="1.6" /><polygon points="320.1,211.2 326.6,211.2 326.6,225.2 320.1,225.2" fill="#16d4a4" /><polygon points="323.6,211.2 326.6,211.2 326.6,225.2 323.6,225.2" fill="#30ecc8" /><polyline points="320.6,206.7 323.1,210.2 325.6,206.7" fill="none" stroke="#22e022" stroke-width="1.6" /><polyline points="323.1,210.2 323.1,213.2" fill="none" stroke="#22e022" stroke-width="1.6" /><polygon points="249.0,268.8 255.5,268.8 255.5,282.8 249.0,282.8" fill="#16d4a4" /><polygon points="252.5,268.8 255.5,268.8 255.5,282.8 252.5,282.8" fill="#30ecc8" /><polyline points="249.5,264.3 252.0,267.8 254.5,264.3" fill="none" stroke="#22e022" stroke-width="1.6" /><polyline points="252.0,267.8 252.0,270.8" fill="none" stroke="#22e022" stroke-width="1.6" /><polygon points="260.6,259.2 267.1,259.2 267.1,273.2 260.6,273.2" fill="#16d4a4" /><polygon points="264.1,259.2 267.1,259.2 267.1,273.2 264.1,273.2" fill="#30ecc8" /><polyline points="261.1,254.7 263.6,258.2 266.1,254.7" fill="none" stroke="#22e022" stroke-width="1.6" /><polyline points="263.6,258.2 263.6,261.2" fill="none" stroke="#22e022" stroke-width="1.6" /><polygon points="362.4,360.9 362.4,369.5 379.7,384.6 401.3,386.8 440.2,374.8 464.0,358.6 468.3,345.6 468.3,338.0" fill="#cc14cc" /><polygon points="362.4,360.9 376.5,350.0 395.0,338.0 428.0,312.0 452.0,318.0 468.3,338.0 464.0,350.0 442.4,367.4 392.7,377.0 377.5,376.0 362.4,369.5" fill="#b4128e" /><polygon points="376.5,350.0 395.0,338.0 428.0,312.0 452.0,318.0 440.0,340.0 400.0,365.0" fill="#a8108a" /><polygon points="333.4,378.0 362.2,387.0 362.2,395.5 333.4,386.5" fill="#cc14cc" /><polygon points="362.2,387.0 376.6,377.0 376.6,385.5 362.2,395.5" fill="#9c0ea0" /><polygon points="333.4,378.0 362.0,362.0 376.6,377.0 362.2,387.0" fill="#b4128e" /><polygon points="348.4,319.8 354.8,319.8 354.8,377.0 348.4,377.0" fill="#14d8a0" /><polygon points="351.3,319.8 354.8,319.8 354.8,377.0 351.3,377.0" fill="#38f4d0" /><polyline points="348.9,319.8 348.9,377.0" fill="none" stroke="#18e838" stroke-width="1" /><polyline points="348.4,376.0 354.8,376.0" fill="none" stroke="#22e022" stroke-width="2" /><polygon points="407.8,317.7 413.0,317.7 413.0,341.4 407.8,341.4" fill="#14d8a0" /><polygon points="410.1,317.7 413.0,317.7 413.0,341.4 410.1,341.4" fill="#38f4d0" /><polyline points="408.3,317.7 408.3,341.4" fill="none" stroke="#18e838" stroke-width="1" /><polyline points="407.8,340.4 413.0,340.4" fill="none" stroke="#22e022" stroke-width="2" /><polygon points="419.7,313.0 425.0,313.0 425.0,331.7 419.7,331.7" fill="#14d8a0" /><polygon points="422.1,313.0 425.0,313.0 425.0,331.7 422.1,331.7" fill="#38f4d0" /><polyline points="420.2,313.0 420.2,331.7" fill="none" stroke="#18e838" stroke-width="1" /><polyline points="419.7,330.7 425.0,330.7" fill="none" stroke="#22e022" stroke-width="2" /><polygon points="394.8,319.8 401.3,319.8 401.3,351.0 394.8,351.0" fill="#14d8a0" /><polygon points="397.7,319.8 401.3,319.8 401.3,351.0 397.7,351.0" fill="#38f4d0" /><polyline points="395.3,319.8 395.3,351.0" fill="none" stroke="#18e838" stroke-width="1" /><polyline points="394.8,350.0 401.3,350.0" fill="none" stroke="#22e022" stroke-width="2" /><polygon points="385.0,316.6 393.7,316.6 393.7,370.6 385.0,370.6" fill="#14d8a0" /><polygon points="388.9,316.6 393.7,316.6 393.7,370.6 388.9,370.6" fill="#38f4d0" /><polyline points="385.5,316.6 385.5,370.6" fill="none" stroke="#18e838" stroke-width="1" /><polyline points="385.0,369.6 393.7,369.6" fill="none" stroke="#22e022" stroke-width="2" /><polygon points="456.4,291.7 461.4,291.7 461.4,328.5 456.4,328.5" fill="#14d8a0" /><polygon points="458.6,291.7 461.4,291.7 461.4,328.5 458.6,328.5" fill="#38f4d0" /><polyline points="456.9,291.7 456.9,328.5" fill="none" stroke="#18e838" stroke-width="1" /><polyline points="456.4,327.5 461.4,327.5" fill="none" stroke="#22e022" stroke-width="2" /><polygon points="448.4,297.0 455.3,297.0 455.3,348.0 448.4,348.0" fill="#14d8a0" /><polygon points="451.5,297.0 455.3,297.0 455.3,348.0 451.5,348.0" fill="#38f4d0" /><polyline points="448.9,297.0 448.9,348.0" fill="none" stroke="#18e838" stroke-width="1" /><polyline points="448.4,347.0 455.3,347.0" fill="none" stroke="#22e022" stroke-width="2" /><polygon points="432.6,305.8 440.0,305.8 440.0,356.6 432.6,356.6" fill="#14d8a0" /><polygon points="435.9,305.8 440.0,305.8 440.0,356.6 435.9,356.6" fill="#38f4d0" /><polyline points="433.1,305.8 433.1,356.6" fill="none" stroke="#18e838" stroke-width="1" /><polyline points="432.6,355.6 440.0,355.6" fill="none" stroke="#22e022" stroke-width="2" /><polygon points="572.0,145.8 582.5,145.8 581.0,154.8 573.5,154.8" fill="#24dc34" /><polygon points="582.8,137.0 594.3,137.0 592.8,146.0 584.3,146.0" fill="#24dc34" /><polygon points="511.5,192.3 523.0,192.3 521.5,201.3 513.0,201.3" fill="#24dc34" /><polygon points="524.4,182.7 535.0,182.7 533.5,191.7 525.9,191.7" fill="#24dc34" /><polygon points="453.0,238.1 463.6,238.1 462.1,247.1 454.5,247.1" fill="#24dc34" /><polygon points="464.0,229.2 475.5,229.2 474.0,238.2 465.5,238.2" fill="#24dc34" /><polygon points="346.4,320.8 356.8,320.8 355.3,329.8 347.9,329.8" fill="#24dc34" /><polygon points="476.5,100.0 489.0,98.0 516.0,103.4 550.0,101.0 589.0,107.5 590.6,131.3 327.5,341.0 334.5,352.0 331.0,355.6 301.0,357.0 262.4,336.4 218.0,331.6 216.8,326.8 251.6,316.0 238.0,291.0" fill="#0c5c90" /><g clip-path="url(#cd)"><polyline points="200.0,50.0 620.0,125.6" fill="none" stroke="#0a40a0" stroke-width="4.4" opacity="0.6"/><polyline points="200.0,61.0 620.0,136.6" fill="none" stroke="#0a40a0" stroke-width="4.4" opacity="0.6"/><polyline points="200.0,72.0 620.0,147.6" fill="none" stroke="#0a40a0" stroke-width="4.4" opacity="0.6"/><polyline points="200.0,83.0 620.0,158.6" fill="none" stroke="#0a40a0" stroke-width="4.4" opacity="0.6"/><polyline points="200.0,94.0 620.0,169.6" fill="none" stroke="#0a40a0" stroke-width="4.4" opacity="0.6"/><polyline points="200.0,105.0 620.0,180.6" fill="none" stroke="#0a40a0" stroke-width="4.4" opacity="0.6"/><polyline points="200.0,116.0 620.0,191.6" fill="none" stroke="#0a40a0" stroke-width="4.4" opacity="0.6"/><polyline points="200.0,127.0 620.0,202.6" fill="none" stroke="#0a40a0" stroke-width="4.4" opacity="0.6"/><polyline points="200.0,138.0 620.0,213.6" fill="none" stroke="#0a40a0" stroke-width="4.4" opacity="0.6"/><polyline points="200.0,149.0 620.0,224.6" fill="none" stroke="#0a40a0" stroke-width="4.4" opacity="0.6"/><polyline points="200.0,160.0 620.0,235.6" fill="none" stroke="#0a40a0" stroke-width="4.4" opacity="0.6"/><polyline points="200.0,171.0 620.0,246.6" fill="none" stroke="#0a40a0" stroke-width="4.4" opacity="0.6"/><polyline points="200.0,182.0 620.0,257.6" fill="none" stroke="#0a40a0" stroke-width="4.4" opacity="0.6"/><polyline points="200.0,193.0 620.0,268.6" fill="none" stroke="#0a40a0" stroke-width="4.4" opacity="0.6"/><polyline points="200.0,204.0 620.0,279.6" fill="none" stroke="#0a40a0" stroke-width="4.4" opacity="0.6"/><polyline points="200.0,215.0 620.0,290.6" fill="none" stroke="#0a40a0" stroke-width="4.4" opacity="0.6"/><polyline points="200.0,226.0 620.0,301.6" fill="none" stroke="#0a40a0" stroke-width="4.4" opacity="0.6"/><polyline points="200.0,237.0 620.0,312.6" fill="none" stroke="#0a40a0" stroke-width="4.4" opacity="0.6"/><polyline points="200.0,248.0 620.0,323.6" fill="none" stroke="#0a40a0" stroke-width="4.4" opacity="0.6"/><polyline points="200.0,259.0 620.0,334.6" fill="none" stroke="#0a40a0" stroke-width="4.4" opacity="0.6"/><polyline points="200.0,270.0 620.0,345.6" fill="none" stroke="#0a40a0" stroke-width="4.4" opacity="0.6"/><polyline points="200.0,281.0 620.0,356.6" fill="none" stroke="#0a40a0" stroke-width="4.4" opacity="0.6"/><polyline points="200.0,292.0 620.0,367.6" fill="none" stroke="#0a40a0" stroke-width="4.4" opacity="0.6"/><polyline points="200.0,303.0 620.0,378.6" fill="none" stroke="#0a40a0" stroke-width="4.4" opacity="0.6"/><polyline points="200.0,314.0 620.0,389.6" fill="none" stroke="#0a40a0" stroke-width="4.4" opacity="0.6"/><polyline points="200.0,325.0 620.0,400.6" fill="none" stroke="#0a40a0" stroke-width="4.4" opacity="0.6"/><polyline points="200.0,336.0 620.0,411.6" fill="none" stroke="#0a40a0" stroke-width="4.4" opacity="0.6"/><polyline points="200.0,347.0 620.0,422.6" fill="none" stroke="#0a40a0" stroke-width="4.4" opacity="0.6"/><polyline points="200.0,358.0 620.0,433.6" fill="none" stroke="#0a40a0" stroke-width="4.4" opacity="0.6"/><polyline points="200.0,369.0 620.0,444.6" fill="none" stroke="#0a40a0" stroke-width="4.4" opacity="0.6"/><polyline points="200.0,380.0 620.0,455.6" fill="none" stroke="#0a40a0" stroke-width="4.4" opacity="0.6"/><polyline points="200.0,391.0 620.0,466.6" fill="none" stroke="#0a40a0" stroke-width="4.4" opacity="0.6"/><polyline points="200.0,402.0 620.0,477.6" fill="none" stroke="#0a40a0" stroke-width="4.4" opacity="0.6"/><polyline points="200.0,413.0 620.0,488.6" fill="none" stroke="#0a40a0" stroke-width="4.4" opacity="0.6"/><polyline points="200.0,424.0 620.0,499.6" fill="none" stroke="#0a40a0" stroke-width="4.4" opacity="0.6"/><polyline points="200.0,435.0 620.0,510.6" fill="none" stroke="#0a40a0" stroke-width="4.4" opacity="0.6"/><polyline points="200.0,44.5 620.0,120.1" fill="none" stroke="#1fa868" stroke-width="2.6" opacity="0.65"/><polyline points="200.0,44.5 620.0,120.1" fill="none" stroke="#3cd048" stroke-width="1.3" stroke-dasharray="3.2 1.6"/><polyline points="200.0,55.5 620.0,131.1" fill="none" stroke="#1fa868" stroke-width="2.6" opacity="0.65"/><polyline points="200.0,55.5 620.0,131.1" fill="none" stroke="#3cd048" stroke-width="1.3" stroke-dasharray="3.2 1.6"/><polyline points="200.0,66.5 620.0,142.1" fill="none" stroke="#1fa868" stroke-width="2.6" opacity="0.65"/><polyline points="200.0,66.5 620.0,142.1" fill="none" stroke="#3cd048" stroke-width="1.3" stroke-dasharray="3.2 1.6"/><polyline points="200.0,77.5 620.0,153.1" fill="none" stroke="#1fa868" stroke-width="2.6" opacity="0.65"/><polyline points="200.0,77.5 620.0,153.1" fill="none" stroke="#3cd048" stroke-width="1.3" stroke-dasharray="3.2 1.6"/><polyline points="200.0,88.5 620.0,164.1" fill="none" stroke="#1fa868" stroke-width="2.6" opacity="0.65"/><polyline points="200.0,88.5 620.0,164.1" fill="none" stroke="#3cd048" stroke-width="1.3" stroke-dasharray="3.2 1.6"/><polyline points="200.0,99.5 620.0,175.1" fill="none" stroke="#1fa868" stroke-width="2.6" opacity="0.65"/><polyline points="200.0,99.5 620.0,175.1" fill="none" stroke="#3cd048" stroke-width="1.3" stroke-dasharray="3.2 1.6"/><polyline points="200.0,110.5 620.0,186.1" fill="none" stroke="#1fa868" stroke-width="2.6" opacity="0.65"/><polyline points="200.0,110.5 620.0,186.1" fill="none" stroke="#3cd048" stroke-width="1.3" stroke-dasharray="3.2 1.6"/><polyline points="200.0,121.5 620.0,197.1" fill="none" stroke="#1fa868" stroke-width="2.6" opacity="0.65"/><polyline points="200.0,121.5 620.0,197.1" fill="none" stroke="#3cd048" stroke-width="1.3" stroke-dasharray="3.2 1.6"/><polyline points="200.0,132.5 620.0,208.1" fill="none" stroke="#1fa868" stroke-width="2.6" opacity="0.65"/><polyline points="200.0,132.5 620.0,208.1" fill="none" stroke="#3cd048" stroke-width="1.3" stroke-dasharray="3.2 1.6"/><polyline points="200.0,143.5 620.0,219.1" fill="none" stroke="#1fa868" stroke-width="2.6" opacity="0.65"/><polyline points="200.0,143.5 620.0,219.1" fill="none" stroke="#3cd048" stroke-width="1.3" stroke-dasharray="3.2 1.6"/><polyline points="200.0,154.5 620.0,230.1" fill="none" stroke="#1fa868" stroke-width="2.6" opacity="0.65"/><polyline points="200.0,154.5 620.0,230.1" fill="none" stroke="#3cd048" stroke-width="1.3" stroke-dasharray="3.2 1.6"/><polyline points="200.0,165.5 620.0,241.1" fill="none" stroke="#1fa868" stroke-width="2.6" opacity="0.65"/><polyline points="200.0,165.5 620.0,241.1" fill="none" stroke="#3cd048" stroke-width="1.3" stroke-dasharray="3.2 1.6"/><polyline points="200.0,176.5 620.0,252.1" fill="none" stroke="#1fa868" stroke-width="2.6" opacity="0.65"/><polyline points="200.0,176.5 620.0,252.1" fill="none" stroke="#3cd048" stroke-width="1.3" stroke-dasharray="3.2 1.6"/><polyline points="200.0,187.5 620.0,263.1" fill="none" stroke="#1fa868" stroke-width="2.6" opacity="0.65"/><polyline points="200.0,187.5 620.0,263.1" fill="none" stroke="#3cd048" stroke-width="1.3" stroke-dasharray="3.2 1.6"/><polyline points="200.0,198.5 620.0,274.1" fill="none" stroke="#1fa868" stroke-width="2.6" opacity="0.65"/><polyline points="200.0,198.5 620.0,274.1" fill="none" stroke="#3cd048" stroke-width="1.3" stroke-dasharray="3.2 1.6"/><polyline points="200.0,209.5 620.0,285.1" fill="none" stroke="#1fa868" stroke-width="2.6" opacity="0.65"/><polyline points="200.0,209.5 620.0,285.1" fill="none" stroke="#3cd048" stroke-width="1.3" stroke-dasharray="3.2 1.6"/><polyline points="200.0,220.5 620.0,296.1" fill="none" stroke="#1fa868" stroke-width="2.6" opacity="0.65"/><polyline points="200.0,220.5 620.0,296.1" fill="none" stroke="#3cd048" stroke-width="1.3" stroke-dasharray="3.2 1.6"/><polyline points="200.0,231.5 620.0,307.1" fill="none" stroke="#1fa868" stroke-width="2.6" opacity="0.65"/><polyline points="200.0,231.5 620.0,307.1" fill="none" stroke="#3cd048" stroke-width="1.3" stroke-dasharray="3.2 1.6"/><polyline points="200.0,242.5 620.0,318.1" fill="none" stroke="#1fa868" stroke-width="2.6" opacity="0.65"/><polyline points="200.0,242.5 620.0,318.1" fill="none" stroke="#3cd048" stroke-width="1.3" stroke-dasharray="3.2 1.6"/><polyline points="200.0,253.5 620.0,329.1" fill="none" stroke="#1fa868" stroke-width="2.6" opacity="0.65"/><polyline points="200.0,253.5 620.0,329.1" fill="none" stroke="#3cd048" stroke-width="1.3" stroke-dasharray="3.2 1.6"/><polyline points="200.0,264.5 620.0,340.1" fill="none" stroke="#1fa868" stroke-width="2.6" opacity="0.65"/><polyline points="200.0,264.5 620.0,340.1" fill="none" stroke="#3cd048" stroke-width="1.3" stroke-dasharray="3.2 1.6"/><polyline points="200.0,275.5 620.0,351.1" fill="none" stroke="#1fa868" stroke-width="2.6" opacity="0.65"/><polyline points="200.0,275.5 620.0,351.1" fill="none" stroke="#3cd048" stroke-width="1.3" stroke-dasharray="3.2 1.6"/><polyline points="200.0,286.5 620.0,362.1" fill="none" stroke="#1fa868" stroke-width="2.6" opacity="0.65"/><polyline points="200.0,286.5 620.0,362.1" fill="none" stroke="#3cd048" stroke-width="1.3" stroke-dasharray="3.2 1.6"/><polyline points="200.0,297.5 620.0,373.1" fill="none" stroke="#1fa868" stroke-width="2.6" opacity="0.65"/><polyline points="200.0,297.5 620.0,373.1" fill="none" stroke="#3cd048" stroke-width="1.3" stroke-dasharray="3.2 1.6"/><polyline points="200.0,308.5 620.0,384.1" fill="none" stroke="#1fa868" stroke-width="2.6" opacity="0.65"/><polyline points="200.0,308.5 620.0,384.1" fill="none" stroke="#3cd048" stroke-width="1.3" stroke-dasharray="3.2 1.6"/><polyline points="200.0,319.5 620.0,395.1" fill="none" stroke="#1fa868" stroke-width="2.6" opacity="0.65"/><polyline points="200.0,319.5 620.0,395.1" fill="none" stroke="#3cd048" stroke-width="1.3" stroke-dasharray="3.2 1.6"/><polyline points="200.0,330.5 620.0,406.1" fill="none" stroke="#1fa868" stroke-width="2.6" opacity="0.65"/><polyline points="200.0,330.5 620.0,406.1" fill="none" stroke="#3cd048" stroke-width="1.3" stroke-dasharray="3.2 1.6"/><polyline points="200.0,341.5 620.0,417.1" fill="none" stroke="#1fa868" stroke-width="2.6" opacity="0.65"/><polyline points="200.0,341.5 620.0,417.1" fill="none" stroke="#3cd048" stroke-width="1.3" stroke-dasharray="3.2 1.6"/><polyline points="200.0,352.5 620.0,428.1" fill="none" stroke="#1fa868" stroke-width="2.6" opacity="0.65"/><polyline points="200.0,352.5 620.0,428.1" fill="none" stroke="#3cd048" stroke-width="1.3" stroke-dasharray="3.2 1.6"/><polyline points="200.0,363.5 620.0,439.1" fill="none" stroke="#1fa868" stroke-width="2.6" opacity="0.65"/><polyline points="200.0,363.5 620.0,439.1" fill="none" stroke="#3cd048" stroke-width="1.3" stroke-dasharray="3.2 1.6"/><polyline points="200.0,374.5 620.0,450.1" fill="none" stroke="#1fa868" stroke-width="2.6" opacity="0.65"/><polyline points="200.0,374.5 620.0,450.1" fill="none" stroke="#3cd048" stroke-width="1.3" stroke-dasharray="3.2 1.6"/><polyline points="200.0,385.5 620.0,461.1" fill="none" stroke="#1fa868" stroke-width="2.6" opacity="0.65"/><polyline points="200.0,385.5 620.0,461.1" fill="none" stroke="#3cd048" stroke-width="1.3" stroke-dasharray="3.2 1.6"/><polyline points="200.0,396.5 620.0,472.1" fill="none" stroke="#1fa868" stroke-width="2.6" opacity="0.65"/><polyline points="200.0,396.5 620.0,472.1" fill="none" stroke="#3cd048" stroke-width="1.3" stroke-dasharray="3.2 1.6"/><polyline points="200.0,407.5 620.0,483.1" fill="none" stroke="#1fa868" stroke-width="2.6" opacity="0.65"/><polyline points="200.0,407.5 620.0,483.1" fill="none" stroke="#3cd048" stroke-width="1.3" stroke-dasharray="3.2 1.6"/><polyline points="200.0,418.5 620.0,494.1" fill="none" stroke="#1fa868" stroke-width="2.6" opacity="0.65"/><polyline points="200.0,418.5 620.0,494.1" fill="none" stroke="#3cd048" stroke-width="1.3" stroke-dasharray="3.2 1.6"/><polyline points="200.0,429.5 620.0,505.1" fill="none" stroke="#1fa868" stroke-width="2.6" opacity="0.65"/><polyline points="200.0,429.5 620.0,505.1" fill="none" stroke="#3cd048" stroke-width="1.3" stroke-dasharray="3.2 1.6"/></g><g clip-path="url(#cd)" opacity="0.2"><polygon points="427.0,123.6 433.5,123.6 433.5,185.6 427.0,185.6" fill="#40f0e0" /><polygon points="439.0,114.0 445.5,114.0 445.5,176.0 439.0,176.0" fill="#40f0e0" /><polygon points="367.8,171.6 374.3,171.6 374.3,233.6 367.8,233.6" fill="#40f0e0" /><polygon points="379.8,161.5 386.3,161.5 386.3,223.5 379.8,223.5" fill="#40f0e0" /><polygon points="308.4,219.0 314.9,219.0 314.9,281.0 308.4,281.0" fill="#40f0e0" /><polygon points="320.1,208.7 326.6,208.7 326.6,270.7 320.1,270.7" fill="#40f0e0" /><polygon points="249.0,266.3 255.5,266.3 255.5,328.3 249.0,328.3" fill="#40f0e0" /><polygon points="260.6,256.7 267.1,256.7 267.1,318.7 260.6,318.7" fill="#40f0e0" /></g><polygon points="552.0,101.0 589.0,107.5 590.6,131.3 562.0,153.0 524.0,124.0" fill="#18b060" opacity="0.22"/><g clip-path="url(#cd)"><polyline points="553.0,100.1 290.0,310.5 262.0,336.0" fill="none" stroke="#1fae6a" stroke-width="3.6" opacity="0.85"/><polyline points="553.0,100.1 290.0,310.5 262.0,336.0" fill="none" stroke="#44e04a" stroke-width="1.5" stroke-dasharray="3.2 1.6"/></g><polyline points="238.0,291.0 476.5,100.0" fill="none" stroke="#7ad08a" stroke-width="1.6" opacity="0.9"/><polyline points="239.0,293.0 477.5,102.0" fill="none" stroke="#2ec050" stroke-width="1.4" stroke-dasharray="3 1.5"/><polyline points="476.5,100.0 489.0,98.0 516.0,103.4 550.0,101.0 589.0,107.5" fill="none" stroke="#58e058" stroke-width="2" /><polyline points="476.5,99.6 489.0,97.6" fill="none" stroke="#f0f0f0" stroke-width="1.4" /><polyline points="489.0,97.6 516.0,103.0" fill="none" stroke="#e0a020" stroke-width="1.4" /><polyline points="552.0,100.6 589.0,107.0" fill="none" stroke="#e8e8e8" stroke-width="1.3" /><polyline points="589.0,107.5 587.0,120.0 590.6,131.3" fill="none" stroke="#30d8a0" stroke-width="2.5" /><polyline points="591.0,118.0 592.5,130.0" fill="none" stroke="#2050e0" stroke-width="1.5" /><polygon points="590.8,130.3 327.5,333.2 327.7,335.8 591.2,132.4" fill="#86ea4c" /><polygon points="591.2,132.4 327.7,335.8 328.0,339.0 591.7,134.9" fill="#d6cc22" /><polygon points="591.7,134.9 328.0,339.0 328.2,342.0 592.2,137.2" fill="#2cd43c" /><polyline points="590.8,130.3 327.5,333.2" fill="none" stroke="#b8f060" stroke-width="1" /><polyline points="327.5,341.0 334.5,352.0 331.0,355.6 301.0,357.0" fill="none" stroke="#30e040" stroke-width="2.2" /><polyline points="238.0,291.0 251.6,316.0" fill="none" stroke="#b8f0c0" stroke-width="2.4" /><polyline points="239.5,293.0 242.5,304.0" fill="none" stroke="#e020d0" stroke-width="1.6" /><polygon points="376.5,301.5 410.0,273.4 461.8,274.4 466.0,283.0 457.5,291.7 435.9,301.5 405.6,312.3 388.3,313.3 379.7,306.9" fill="#10668c" /><g clip-path="url(#cs)"><polyline points="370.0,267.6 470.0,285.6" fill="none" stroke="#0a40a0" stroke-width="4.4" opacity="0.6"/><polyline points="370.0,278.6 470.0,296.6" fill="none" stroke="#0a40a0" stroke-width="4.4" opacity="0.6"/><polyline points="370.0,289.6 470.0,307.6" fill="none" stroke="#0a40a0" stroke-width="4.4" opacity="0.6"/><polyline points="370.0,300.6 470.0,318.6" fill="none" stroke="#0a40a0" stroke-width="4.4" opacity="0.6"/><polyline points="370.0,311.6 470.0,329.6" fill="none" stroke="#0a40a0" stroke-width="4.4" opacity="0.6"/><polyline points="370.0,322.6 470.0,340.6" fill="none" stroke="#0a40a0" stroke-width="4.4" opacity="0.6"/><polyline points="370.0,333.6 470.0,351.6" fill="none" stroke="#0a40a0" stroke-width="4.4" opacity="0.6"/><polyline points="370.0,344.6 470.0,362.6" fill="none" stroke="#0a40a0" stroke-width="4.4" opacity="0.6"/><polyline points="370.0,355.6 470.0,373.6" fill="none" stroke="#0a40a0" stroke-width="4.4" opacity="0.6"/><polyline points="370.0,262.1 470.0,280.1" fill="none" stroke="#1fa868" stroke-width="2.6" opacity="0.65"/><polyline points="370.0,262.1 470.0,280.1" fill="none" stroke="#3cd048" stroke-width="1.3" stroke-dasharray="3.2 1.6"/><polyline points="370.0,273.1 470.0,291.1" fill="none" stroke="#1fa868" stroke-width="2.6" opacity="0.65"/><polyline points="370.0,273.1 470.0,291.1" fill="none" stroke="#3cd048" stroke-width="1.3" stroke-dasharray="3.2 1.6"/><polyline points="370.0,284.1 470.0,302.1" fill="none" stroke="#1fa868" stroke-width="2.6" opacity="0.65"/><polyline points="370.0,284.1 470.0,302.1" fill="none" stroke="#3cd048" stroke-width="1.3" stroke-dasharray="3.2 1.6"/><polyline points="370.0,295.1 470.0,313.1" fill="none" stroke="#1fa868" stroke-width="2.6" opacity="0.65"/><polyline points="370.0,295.1 470.0,313.1" fill="none" stroke="#3cd048" stroke-width="1.3" stroke-dasharray="3.2 1.6"/><polyline points="370.0,306.1 470.0,324.1" fill="none" stroke="#1fa868" stroke-width="2.6" opacity="0.65"/><polyline points="370.0,306.1 470.0,324.1" fill="none" stroke="#3cd048" stroke-width="1.3" stroke-dasharray="3.2 1.6"/><polyline points="370.0,317.1 470.0,335.1" fill="none" stroke="#1fa868" stroke-width="2.6" opacity="0.65"/><polyline points="370.0,317.1 470.0,335.1" fill="none" stroke="#3cd048" stroke-width="1.3" stroke-dasharray="3.2 1.6"/><polyline points="370.0,328.1 470.0,346.1" fill="none" stroke="#1fa868" stroke-width="2.6" opacity="0.65"/><polyline points="370.0,328.1 470.0,346.1" fill="none" stroke="#3cd048" stroke-width="1.3" stroke-dasharray="3.2 1.6"/><polyline points="370.0,339.1 470.0,357.1" fill="none" stroke="#1fa868" stroke-width="2.6" opacity="0.65"/><polyline points="370.0,339.1 470.0,357.1" fill="none" stroke="#3cd048" stroke-width="1.3" stroke-dasharray="3.2 1.6"/><polyline points="370.0,350.1 470.0,368.1" fill="none" stroke="#1fa868" stroke-width="2.6" opacity="0.65"/><polyline points="370.0,350.1 470.0,368.1" fill="none" stroke="#3cd048" stroke-width="1.3" stroke-dasharray="3.2 1.6"/></g><polyline points="376.5,301.5 410.0,273.4 461.8,274.4 466.0,283.0 457.5,291.7 435.9,301.5 405.6,312.3 388.3,313.3 379.7,306.9 376.5,301.5" fill="none" stroke="#6ee07a" stroke-width="1.8" /><polyline points="435.9,301.5 405.6,312.3 388.3,313.3 379.7,306.9" fill="none" stroke="#e8e8f0" stroke-width="1.4" /><polyline points="466.0,283.0 457.5,291.7 435.9,301.5" fill="none" stroke="#e040c0" stroke-width="1.2" /><rect x="433.5" y="272.8" width="5" height="4.6" fill="none" stroke="#d8b0d8" stroke-width="1"/><polyline points="411.0,275.0 424.0,276.0" fill="none" stroke="#f4f4f4" stroke-width="1.4" /><polygon points="455.0,244.8 461.6,244.8 461.6,274.0 455.0,274.0" fill="#14d8a0" /><polygon points="458.0,244.8 461.6,244.8 461.6,274.0 458.0,274.0" fill="#38f4d0" /><polyline points="455.5,244.8 455.5,274.0" fill="none" stroke="#18e838" stroke-width="1" /><polyline points="455.0,273.0 461.6,273.0" fill="none" stroke="#22e022" stroke-width="2" /><polygon points="466.0,236.0 473.5,236.0 473.5,293.0 466.0,293.0" fill="#14d8a0" /><polygon points="469.4,236.0 473.5,236.0 473.5,293.0 469.4,293.0" fill="#38f4d0" /><polyline points="466.5,236.0 466.5,293.0" fill="none" stroke="#18e838" stroke-width="1" /><polyline points="466.0,292.0 473.5,292.0" fill="none" stroke="#22e022" stroke-width="2" /><polygon points="223.0,338.0 266.0,340.0 266.0,347.0 223.0,346.0" fill="#b4128e" /><polygon points="221.0,371.0 258.8,374.5 258.8,380.5 221.0,377.0" fill="#cc14cc" /><polygon points="258.8,374.5 268.5,359.4 268.5,365.4 258.8,380.5" fill="#9c0ea0" /><polygon points="221.0,371.0 231.8,351.9 268.5,359.4 258.8,374.5" fill="#b4128e" /><polygon points="234.0,370.0 266.4,370.0 255.6,379.7 231.9,374.3" fill="#cc14cc" /><polygon points="241.5,337.8 248.0,337.8 248.0,358.3 241.5,358.3" fill="#14d8a0" /><polygon points="244.4,337.8 248.0,337.8 248.0,358.3 244.4,358.3" fill="#38f4d0" /><polyline points="242.0,337.8 242.0,358.3" fill="none" stroke="#18e838" stroke-width="1" /><polyline points="241.5,357.3 248.0,357.3" fill="none" stroke="#22e022" stroke-width="2" /><polygon points="199.4,378.6 203.8,393.0 203.8,405.5 199.4,391.0" fill="#9c0ea0" /><polygon points="203.8,393.0 230.8,390.0 230.8,403.5 203.8,405.5" fill="#cc14cc" /><polygon points="199.4,378.6 226.0,375.5 230.8,390.0 203.8,393.0" fill="#b4128e" /><polyline points="194.0,351.9 214.5,385.4" fill="none" stroke="#22e022" stroke-width="4.2" /><polyline points="214.5,338.9 214.5,385.4" fill="none" stroke="#22e022" stroke-width="4.2" /><polyline points="226.4,341.0 214.5,385.4" fill="none" stroke="#22e022" stroke-width="4.2" /><polyline points="259.9,336.7 214.5,385.4" fill="none" stroke="#22e022" stroke-width="4.2" /><polygon points="127.9,420.5 147.3,422.7 147.3,434.0 127.9,431.0" fill="#cc14cc" /><polygon points="147.3,422.7 184.0,418.4 181.5,432.4 147.3,434.0" fill="#9c0ea0" /><polygon points="127.9,420.5 134.4,409.7 180.8,410.8 184.0,418.4 147.3,422.7" fill="#b4128e" /><polyline points="216.7,323.8 185.3,340.0 160.5,360.5 150.8,371.3 145.4,393.0 144.3,414.5" fill="none" stroke="#34e43c" stroke-width="6.4" stroke-linejoin="round"/><polyline points="216.7,323.8 185.3,340.0 160.5,360.5 150.8,371.3 145.4,393.0 144.3,414.5" fill="none" stroke="#b8f8b0" stroke-width="2.2" stroke-linejoin="round"/><polyline points="217.8,332.4 195.0,350.8 175.6,367.0 167.0,382.0 163.7,414.5" fill="none" stroke="#34e43c" stroke-width="6.4" stroke-linejoin="round"/><polyline points="217.8,332.4 195.0,350.8 175.6,367.0 167.0,382.0 163.7,414.5" fill="none" stroke="#b8f8b0" stroke-width="2.2" stroke-linejoin="round"/><polyline points="216.7,323.8 185.3,340.0 160.5,360.5" fill="none" stroke="#f04020" stroke-width="1.2" transform="translate(-1.5,-2)"/><polyline points="217.8,332.4 195.0,350.8 175.6,367.0" fill="none" stroke="#e050c0" stroke-width="1.1" transform="translate(1.5,2)"/><polyline points="185.3,340.0 195.0,350.8" fill="none" stroke="#22e022" stroke-width="3" /><polyline points="153.0,367.0 170.0,368.5" fill="none" stroke="#22e022" stroke-width="3.2" /><polyline points="145.4,408.0 163.7,408.0" fill="none" stroke="#22e022" stroke-width="3.2" /><polygon points="195.0,350.8 214.5,338.0 216.0,343.0 198.0,355.0" fill="#1060d0" /><polyline points="196.0,352.5 215.0,340.5" fill="none" stroke="#40c0ff" stroke-width="1" stroke-dasharray="1.5 1.5"/><polyline points="251.6,316.0 216.8,326.8" fill="none" stroke="#70f080" stroke-width="2.2" /><polyline points="218.0,331.6 262.4,336.4 301.0,357.0" fill="none" stroke="#50e860" stroke-width="2.4" /><polyline points="219.0,333.5 262.0,338.5 300.0,358.6" fill="none" stroke="#f03020" stroke-width="1.2" /><polyline points="262.0,338.5 300.0,358.6" fill="none" stroke="#e030c0" stroke-width="1.2" transform="translate(0,1.5)"/><polygon points="285.9,416.0 329.0,429.4 329.0,438.4 285.9,425.0" fill="#cc14cc" /><polygon points="329.0,429.4 346.4,413.0 346.4,422.0 329.0,438.4" fill="#9c0ea0" /><polygon points="285.9,416.0 301.0,407.8 346.4,413.0 329.0,429.4" fill="#b4128e" /><polygon points="296.7,438.0 320.4,440.0 320.4,449.0 296.7,447.0" fill="#cc14cc" /><polygon points="320.4,440.0 329.0,432.7 329.0,441.7 320.4,449.0" fill="#9c0ea0" /><polygon points="296.7,438.0 311.8,427.3 329.0,432.7 320.4,440.0" fill="#b4128e" /><polygon points="245.9,460.7 266.4,468.5 266.4,478.0 245.9,470.2" fill="#cc14cc" /><polygon points="266.4,468.5 285.9,461.8 285.9,471.3 266.4,478.0" fill="#9c0ea0" /><polygon points="245.9,460.7 266.4,455.3 285.9,461.8 266.4,468.5" fill="#b4128e" /><polygon points="188.6,477.0 201.6,484.0 201.6,493.5 188.6,486.5" fill="#cc14cc" /><polygon points="201.6,484.0 224.3,478.0 224.3,487.5 201.6,493.5" fill="#9c0ea0" /><polygon points="188.6,477.0 206.0,469.4 224.3,478.0 201.6,484.0" fill="#b4128e" /><polygon points="131.0,483.2 138.7,490.5 138.7,501.5 131.0,494.2" fill="#cc14cc" /><polygon points="138.7,490.5 163.5,486.4 163.5,497.4 138.7,501.5" fill="#9c0ea0" /><polygon points="131.0,483.2 151.6,478.9 163.5,486.4 138.7,490.5" fill="#b4128e" /><polygon points="189.5,473.5 199.0,480.0 199.0,480.0 189.5,473.5" fill="#cc14cc" /><polygon points="199.0,480.0 222.0,476.0 222.0,476.0 199.0,480.0" fill="#9c0ea0" /><polygon points="189.5,473.5 205.0,469.0 222.0,476.0 199.0,480.0" fill="#b4128e" /><polygon points="28.5,481.0 35.0,503.0 35.0,517.0 28.5,495.0" fill="#cc14cc" /><polygon points="35.0,503.0 65.2,497.0 65.2,511.0 35.0,517.0" fill="#9c0ea0" /><polygon points="28.5,481.0 39.3,477.8 65.2,497.0 35.0,503.0" fill="#b4128e" /><polyline points="301.0,358.9 301.0,402.0" fill="none" stroke="#22e022" stroke-width="3" /><polyline points="330.5,358.9 330.5,411.0" fill="none" stroke="#22e022" stroke-width="3" /><polyline points="311.8,385.0 311.8,430.5" fill="none" stroke="#22e022" stroke-width="3" /><polyline points="299.0,359.6 332.0,359.6" fill="none" stroke="#22e022" stroke-width="3" /><polyline points="297.8,385.0 331.3,384.0" fill="none" stroke="#22e022" stroke-width="3.2" /><polyline points="43.6,477.0 100.0,464.0 150.0,452.3 180.0,445.5 199.4,440.6 253.5,418.6 285.9,396.0 296.7,378.6 297.8,358.0" fill="none" stroke="#30e838" stroke-width="6" stroke-linejoin="round"/><polyline points="50.0,489.7 110.0,476.0 150.0,468.0 180.0,463.0 214.6,451.0 277.2,428.3 314.0,404.6 331.3,383.0 334.0,359.0" fill="none" stroke="#30e838" stroke-width="6" stroke-linejoin="round"/><polyline points="43.6,477.0 100.0,464.0" fill="none" stroke="#28e8a0" stroke-width="6" /><polyline points="150.0,452.3 180.0,445.5 199.4,440.6" fill="none" stroke="#c8e820" stroke-width="6" /><polyline points="199.4,440.2 253.5,418.6" fill="none" stroke="#e89020" stroke-width="5.6" /><polyline points="199.4,439.0 253.5,417.4" fill="none" stroke="#f04020" stroke-width="1.4" /><polyline points="253.5,418.6 285.9,396.0 296.7,378.6" fill="none" stroke="#a8f0a0" stroke-width="6" /><polyline points="253.5,418.6 285.9,396.0 296.7,378.6" fill="none" stroke="#f4fff0" stroke-width="1.4" /><polyline points="50.0,489.7 110.0,476.0" fill="none" stroke="#a0f0a0" stroke-width="5" stroke-dasharray="1.5 1"/><polyline points="85.0,481.7 143.0,469.4" fill="none" stroke="#e8b0e8" stroke-width="5" stroke-dasharray="1.5 1"/><polyline points="150.0,468.0 180.0,463.0 214.6,451.0" fill="none" stroke="#1058e0" stroke-width="5.8" /><polyline points="150.0,468.0 180.0,463.0 214.6,451.0" fill="none" stroke="#50c8ff" stroke-width="1.6" stroke-dasharray="1.5 1.5"/><polyline points="214.6,451.0 277.2,428.3" fill="none" stroke="#20e0b0" stroke-width="6" /><polyline points="314.0,404.6 331.3,383.0 334.0,359.0" fill="none" stroke="#d8e020" stroke-width="5.6" /><polyline points="315.5,405.5 333.0,383.5 335.6,359.0" fill="none" stroke="#f06020" stroke-width="1.3" /><polyline points="199.4,440.2 214.6,451.0" fill="none" stroke="#22e022" stroke-width="3.2" /><polyline points="253.5,418.6 277.2,428.3" fill="none" stroke="#22e022" stroke-width="3.2" /><polyline points="285.9,396.0 314.0,404.6" fill="none" stroke="#22e022" stroke-width="3.2" /><polyline points="199.4,440.2 206.0,476.0 214.6,451.0" fill="none" stroke="#22e022" stroke-width="3.8" /><polyline points="253.5,418.6 266.4,458.6 277.2,428.3" fill="none" stroke="#22e022" stroke-width="3.8" /><polyline points="143.0,452.0 151.6,463.8" fill="none" stroke="#22e022" stroke-width="3.2" /><polyline points="143.0,452.0 147.0,484.0 151.6,463.8" fill="none" stroke="#22e022" stroke-width="3" /><polyline points="43.6,474.5 50.0,489.7" fill="none" stroke="#22e022" stroke-width="3.4" /><polyline points="45.0,476.0 50.0,497.0" fill="none" stroke="#22e022" stroke-width="3.4" /><polyline points="70.0,525.3 35.0,518.8" fill="none" stroke="#20c020" stroke-width="4.5" /><polygon points="25.5,516.5 37.0,514.0 36.0,523.5" fill="#30e030" /><polyline points="83.0,521.5 92.0,513.0" fill="none" stroke="#e02020" stroke-width="5" /><polygon points="89.0,508.0 99.0,506.5 96.0,516.5" fill="#ff4030" /><polygon points="72.8,522.0 79.2,522.0 79.2,488.0 72.8,488.0" fill="#1018e0" /><polygon points="70.5,489.5 76.0,479.5 81.5,489.5" fill="#2030ff" /><polygon points="69.5,524.0 80.0,524.0 80.0,534.7 69.5,534.7" fill="#ffffff" /><polygon points="80.0,524.0 83.6,521.5 83.6,532.0 80.0,534.7" fill="#c8c8c8" /><polygon points="69.5,524.0 73.0,521.5 83.6,521.5 80.0,524.0" fill="#e8e8e8" /></g></g></svg>
<div class="abs" style="left:629px;top:74px;width:211px;height:13px;background:linear-gradient(#dbe5f1,#c3d1e4);"></div>
<div class="t pg" style="left:632px;top:76.2px;color:#1e1e1e">Proprietà</div>
<svg class="abs" style="left:812px;top:74px" width="28" height="13" viewBox="0 0 28 13"><g fill="none" stroke="#9aa4b4" stroke-width="1"><circle cx="7.5" cy="6" r="2.6"/><path d="M3 10l3-3M8 3.5l3 0"/></g><rect x="14.5" y="1.5" width="11" height="10" fill="#f6f0f0" stroke="#555"/><path d="M17 4l6 5M23 4l-6 5" stroke="#c03030" stroke-width="1.6"/></svg>
<div class="abs" style="left:629px;top:89px;width:211px;height:15px;background:#fff;border:1px solid #9a9a9a;box-sizing:border-box"></div>
<div class="t pg" style="left:632.5px;top:92.8px;color:#222;letter-spacing:-0.1px">Piastra C.A.</div>
<svg class="abs" style="left:824px;top:90px" width="15" height="13"><rect x="0.5" y="0.5" width="13" height="12" fill="#ececec" stroke="#bdbdbd"/><path d="M4 5h6l-3 3.5z" fill="#000"/></svg>
<div class="abs" style="left:629px;top:106.8px;width:211px;height:252px;background:#fff;border:1px solid #9a9a9a;border-right:none;box-sizing:border-box"></div>
<div class="abs" style="left:630px;top:107.8px;width:11.5px;height:210.08px;background:#c9c9c9"></div>
<div class="abs" style="left:641.5px;top:107.8px;width:88px;height:13.13px;background:#c6c6c6"></div>
<div class="abs" style="left:641.5px;top:119.93px;width:199px;height:1px;background:#d4d4d4"></div>
<div class="t pg" style="left:644px;top:110.40px;color:#222;letter-spacing:0px">Quota</div>
<div class="t pg" style="left:733px;top:110.40px;font-weight:bold;letter-spacing:0.22px;color:#111">Livello 0</div>
<div class="abs" style="left:641.5px;top:133.06px;width:199px;height:1px;background:#d4d4d4"></div>
<div class="t pg" style="left:644px;top:123.53px;color:#222;letter-spacing:0px">Spessore</div>
<div class="t pg" style="left:733px;top:123.53px;font-weight:bold;letter-spacing:0.22px;color:#111">70</div>
<div class="abs" style="left:641.5px;top:146.19px;width:199px;height:1px;background:#d4d4d4"></div>
<div class="t pg" style="left:644px;top:136.66px;color:#222;letter-spacing:0px">Punti</div>
<svg class="abs" style="left:631px;top:136.06px" width="10" height="10"><rect x="0.5" y="0.5" width="8" height="8" fill="#fff" stroke="#222"/><path d="M2 4.5h5M4.5 2v5" stroke="#000" stroke-width="1"/></svg>
<div class="t pg" style="left:733px;top:136.66px;font-weight:bold;letter-spacing:0.22px;color:#111">3 punti</div>
<div class="abs" style="left:641.5px;top:159.32px;width:199px;height:1px;background:#d4d4d4"></div>
<div class="t pg" style="left:644px;top:149.79px;color:#222;letter-spacing:0px">Estradosso</div>
<div class="t pg" style="left:733px;top:149.79px;font-weight:bold;letter-spacing:0.22px;color:#111">0</div>
<div class="abs" style="left:641.5px;top:172.45px;width:199px;height:1px;background:#d4d4d4"></div>
<div class="t pg" style="left:644px;top:162.92px;color:#222;letter-spacing:0px">Materiale</div>
<div class="t pg" style="left:733px;top:162.92px;font-weight:bold;letter-spacing:0.22px;color:#111">RCK250</div>
<div class="abs" style="left:641.5px;top:185.58px;width:199px;height:1px;background:#d4d4d4"></div>
<div class="t pg" style="left:644px;top:176.05px;color:#222;letter-spacing:0px">Carico superficiale</div>
<div class="abs" style="left:732px;top:174.65px;width:15px;height:9.6px;background:#ff00ff;border:1px solid #222;box-sizing:border-box"></div>
<div class="t pg" style="left:754px;top:176.05px;font-weight:bold;letter-spacing:0.22px;color:#111">terreno</div>
<div class="abs" style="left:641.5px;top:198.71px;width:199px;height:1px;background:#d4d4d4"></div>
<div class="t pg" style="left:644px;top:189.18px;color:#222;letter-spacing:0px">Carico potenziale</div>
<div class="abs" style="left:732px;top:187.78px;width:15px;height:9.6px;background:#fff;border:1px solid #222;box-sizing:border-box"></div>
<div class="t pg" style="left:754px;top:189.18px;font-weight:bold;letter-spacing:0.22px;color:#111">Nessuno</div>
<div class="abs" style="left:641.5px;top:211.84px;width:199px;height:1px;background:#d4d4d4"></div>
<div class="t pg" style="left:644px;top:202.31px;color:#222;letter-spacing:0px">Variazione termica</div>
<div class="abs" style="left:732px;top:200.91px;width:15px;height:9.6px;background:#fff;border:1px solid #222;box-sizing:border-box"></div>
<div class="t pg" style="left:754px;top:202.31px;font-weight:bold;letter-spacing:0.22px;color:#111">Nessuno</div>
<div class="abs" style="left:641.5px;top:224.97px;width:199px;height:1px;background:#d4d4d4"></div>
<div class="t pg" style="left:644px;top:215.44px;color:#222;letter-spacing:0px">Sovraresistenza</div>
<div class="t pg" style="left:733px;top:215.44px;font-weight:bold;letter-spacing:0.22px;color:#111">0</div>
<div class="abs" style="left:641.5px;top:238.10px;width:199px;height:1px;background:#d4d4d4"></div>
<div class="t pg" style="left:644px;top:228.57px;color:#222;letter-spacing:0px">Sisma Z</div>
<div class="t pg" style="left:733px;top:228.57px;font-weight:bold;letter-spacing:0.22px;color:#111">No</div>
<div class="abs" style="left:641.5px;top:251.23px;width:199px;height:1px;background:#d4d4d4"></div>
<div class="t pg" style="left:644px;top:241.70px;color:#222;letter-spacing:0px">Forma</div>
<div class="t pg" style="left:733px;top:241.70px;font-weight:bold;letter-spacing:0.22px;color:#111">Superficie + Solido</div>
<div class="abs" style="left:641.5px;top:264.36px;width:199px;height:1px;background:#d4d4d4"></div>
<div class="t pg" style="left:644px;top:254.83px;color:#222;letter-spacing:0px">Fondazione</div>
<svg class="abs" style="left:631px;top:254.23px" width="10" height="10"><rect x="0.5" y="0.5" width="8" height="8" fill="#fff" stroke="#222"/><path d="M2 4.5h5M4.5 2v5" stroke="#000" stroke-width="1"/></svg>
<div class="t pg" style="left:733px;top:254.83px;font-weight:bold;letter-spacing:0.22px;color:#111">Da sito : 0; Default; De</div>
<div class="abs" style="left:641.5px;top:277.49px;width:199px;height:1px;background:#d4d4d4"></div>
<div class="t pg" style="left:644px;top:267.96px;color:#222;letter-spacing:0px">Dimensione mesh</div>
<div class="t pg" style="left:733px;top:267.96px;font-weight:bold;letter-spacing:0.22px;color:#111">Default</div>
<div class="abs" style="left:641.5px;top:290.62px;width:199px;height:1px;background:#d4d4d4"></div>
<div class="t pg" style="left:644px;top:281.09px;color:#222;letter-spacing:0px">Tipo mesh</div>
<div class="t pg" style="left:733px;top:281.09px;font-weight:bold;letter-spacing:0.22px;color:#111">Default</div>
<div class="abs" style="left:641.5px;top:303.75px;width:199px;height:1px;background:#d4d4d4"></div>
<div class="t pg" style="left:644px;top:294.22px;color:#222;letter-spacing:0px">Punti FEM</div>
<svg class="abs" style="left:631px;top:293.62px" width="10" height="10"><rect x="0.5" y="0.5" width="8" height="8" fill="#fff" stroke="#222"/><path d="M2 4.5h5M4.5 2v5" stroke="#000" stroke-width="1"/></svg>
<div class="t pg" style="left:733px;top:294.22px;font-weight:bold;letter-spacing:0.22px;color:#111">3 punti</div>
<div class="abs" style="left:641.5px;top:316.88px;width:199px;height:1px;background:#d4d4d4"></div>
<div class="t pg" style="left:644px;top:307.35px;color:#222;letter-spacing:0px">Cerniere</div>
<div class="t pg" style="left:733px;top:307.35px;font-weight:bold;letter-spacing:0.22px;color:#111">Nessuno</div>
<div class="abs" style="left:729.5px;top:107.8px;width:1px;height:210.08px;background:#d4d4d4"></div>
<svg class="abs" style="left:824px;top:107.8px" width="16" height="13"><rect x="0.5" y="0.5" width="13" height="11.5" fill="#ececec" stroke="#bdbdbd"/><path d="M4 5h6l-3 3.5z" fill="#000"/></svg>
<div class="abs" style="left:629px;top:364.5px;width:211px;height:76.5px;background:#eeeeee;border:1px solid #a0a0a0;border-right:none;box-sizing:border-box"></div>
<div class="t pg" style="left:632px;top:368.3px;font-weight:bold;">Quota</div>
<div class="t pg" style="left:632px;top:379.00px;letter-spacing:-0.15px;color:#1a1a1a">Quota di inserimento esprimibile come livello,</div>
<div class="t pg" style="left:632px;top:389.75px;letter-spacing:-0.15px;color:#1a1a1a">falda, piano orizzontale alla Z specificata. Il</div>
<div class="t pg" style="left:632px;top:400.50px;letter-spacing:-0.15px;color:#1a1a1a">valore è espresso in cm.</div>
<div class="abs" style="left:629px;top:448px;width:211px;height:13px;background:linear-gradient(#dbe5f1,#c3d1e4);"></div>
<div class="t pg" style="left:632px;top:450.2px;color:#1e1e1e">Punto di vista</div>
<svg class="abs" style="left:812px;top:448px" width="28" height="13" viewBox="0 0 28 13"><g fill="none" stroke="#9aa4b4" stroke-width="1"><circle cx="7.5" cy="6" r="2.6"/><path d="M3 10l3-3M8 3.5l3 0"/></g><rect x="14.5" y="1.5" width="11" height="10" fill="#f6f0f0" stroke="#555"/><path d="M17 4l6 5M23 4l-6 5" stroke="#c03030" stroke-width="1.6"/></svg>
<div class="abs" style="left:629px;top:461px;width:211px;height:131px;background:#000"></div>
<svg class="abs" style="left:0;top:0" width="840" height="625" viewBox="0 0 840 625"><rect x="634" y="479.800" width="96" height="95.500" fill="#020222"/><path d="M676 526.700L648 522.800" stroke="#188018" stroke-width="4.500"/><path d="M642.500 521.700l8.500-4.200-1.200 9.200z" fill="#20a020"/><path d="M686 524.500l9-7" stroke="#c01818" stroke-width="4.500"/><path d="M692 514.500l9-1.800-3 8.500z" fill="#e02020"/><rect x="679.300" y="497" width="5" height="28" fill="#1018d8"/><path d="M677.500 499l4.300-11 4.300 11z" fill="#2028f0"/><rect x="676" y="524.500" width="9" height="8.500" fill="#fff"/><path d="M685 524.500l2-1.500v8.500l-2 1.500z" fill="#c4c4c4"/><path d="M676 524.500l2-1.500h9l-2 1.500z" fill="#e4e4e4"/><g fill="none" stroke="#e0e0e0" stroke-width="1"><circle cx="787.500" cy="527.400" r="42.200"/><circle cx="787.500" cy="527.400" r="21.200"/><path d="M740 527.400H835.500M787.500 479.800V575.300"/></g><path d="M787.500 527.400L801.600 516.400M787.500 527.400L753 522" stroke="#fff" stroke-width="2"/><g fill="#e8e8e8" font-family="Liberation Sans,sans-serif" font-size="10"><text x="788.800" y="503">Z</text><text x="803.500" y="525.500">X</text><text x="753.500" y="533.500">Y</text></g></svg>
<div class="abs" style="left:20px;top:538px;width:603px;height:22px;background:#efefef"></div>
<div class="abs" style="left:23px;top:538px;width:43.5px;height:16.5px;background:#f8f8f8;border:1px solid #8c8c8c;border-top:none;box-sizing:border-box;border-radius:0 0 2px 2px;box-shadow:1px 1px 0 #b0b0b0"></div>
<div class="t pg" style="left:28px;top:543px;letter-spacing:-0.45px;color:#222">Struttura</div>
<div class="abs" style="left:20px;top:561px;width:605px;height:31px;background:#fff;border:1px solid #7a7a7a;border-right-color:#ddd;border-bottom-color:#ddd;box-sizing:border-box"></div>
<div class="t pg" style="left:22px;top:575.5px;letter-spacing:-0.4px;color:#222">Comando:</div>
<svg class="abs" style="left:610px;top:563px" width="14" height="28"><path d="M4 8l3-3 3 3z M4 19l3 3 3-3z" fill="#333"/></svg>
<div class="abs" style="left:20px;top:592px;width:820px;height:19px;background:#fbfbfb"></div>
<div class="abs" style="left:20px;top:594.5px;width:108px;height:15.5px;background:#ebebeb;border:1px solid #c4c4c4;border-left-color:#aaa;box-sizing:border-box"></div>
<div class="abs" style="left:128px;top:594.5px;width:16.5px;height:15.5px;background:#efefef;border:1px solid #c4c4c4;border-left:none;box-sizing:border-box"></div>
<div class="abs" style="left:144px;top:594.5px;width:16.5px;height:15.5px;background:#efefef;border:1px solid #c4c4c4;border-left:none;box-sizing:border-box"></div>
<div class="abs" style="left:160.5px;top:594.5px;width:16.5px;height:15.5px;background:#efefef;border:1px solid #c4c4c4;border-left:none;box-sizing:border-box"></div>
<div class="t pg" style="left:50px;top:598.4px;letter-spacing:-0.1px;color:#111">Note di disegno</div>
<svg class="abs" style="left:20px;top:594px" width="160" height="16" viewBox="0 0 160 16"><rect x="2" y="4" width="8" height="8" fill="#e21a1a"/><path d="M4 6h1v1H4zM7 6h1v1H7zM5.5 8h1v1h-1zM4 10h1v1H4zM7 10h1v1H7z" fill="#ffb0b0"/><path d="M12 3v6M12 10.6v1.4" stroke="#e21a1a" stroke-width="1.4"/><path d="M111 8l4-4 4 4v5h-2.5V9l-1.5-1.5L113.500 9v4H111z" fill="#cfe0ff" stroke="#1838c8" stroke-width="1"/><path d="M121.500 3v6M121.500 10.600v1.400" stroke="#e21a1a" stroke-width="1.400"/><path d="M127 8l4-4 4 4v5h-2.5V9l-1.500-1.500L129.500 9v4H127z" fill="#cfe0ff" stroke="#1838c8" stroke-width="1"/><path d="M131 8h5l-1.500-1.500M136 8l-1.500 1.500" stroke="#10a020" stroke-width="1" fill="none"/><path d="M138 3v6M138 10.600v1.400" stroke="#e21a1a" stroke-width="1.400"/><path d="M143.500 6h3v6h-3zM148 6h3v6h-3zM146 7.500h2.500v2H146zM144.500 4h1.500v2h-1.500zM148.500 4h1.500v2h-1.500z" fill="#222"/><path d="M153.500 3v6M153.500 10.600v1.400" stroke="#e21a1a" stroke-width="1.400"/></svg>
<div class="abs" style="left:0;top:611px;width:840px;height:14px;background:#ececec;border-top:1px solid #a8a8a8;box-sizing:border-box"></div>
<div class="abs" style="left:1px;top:612px;width:496px;height:13px;border:1px solid #b8b8b8;border-left-color:#777;border-bottom:none;box-sizing:border-box;background:#ededed"></div>
<div class="abs" style="left:497px;top:612px;width:100px;height:13px;border:1px solid #b8b8b8;border-bottom:none;box-sizing:border-box;background:#eee"></div>
<div class="t pg" style="left:500px;top:615px;letter-spacing:-0.4px;color:#222">2027;574;0</div>
<div class="abs" style="left:637px;top:612px;width:78.5px;height:13px;background:#fbfbfb;border:1px solid #9a9a9a;border-bottom:none;border-right-color:#ccc;box-sizing:border-box"></div>
<div class="abs" style="left:676px;top:613px;width:39px;height:12px;background:#f1f1f1"></div>
<div class="abs" style="left:719px;top:612px;width:116px;height:13px;background:#f0f0f0;border:1px solid #9a9a9a;border-bottom:none;border-right-color:#ccc;box-sizing:border-box"></div>
<div class="abs" style="left:720px;top:613px;width:40px;height:12px;background:#fbfbfb"></div>
<div class="t pg" style="left:646px;top:614.6px;letter-spacing:-0.3px;color:#111">PICK</div>
<div class="t pg" style="left:684px;top:614.6px;letter-spacing:-0.3px;color:#111">ORTO</div>
<div class="t pg" style="left:726.5px;top:614.6px;letter-spacing:-0.3px;color:#111">SNAP</div>
<svg class="abs" style="left:599px;top:611px" width="16" height="14"><path d="M2 7h11v6H2z" fill="#9db8dc" stroke="#5a7fb5" stroke-width="0.8"/><path d="M6 1l1.3 2.6 2.8.3-2 2 .5 2.8L6 7.4 3.4 8.7l.5-2.8-2-2 2.8-.3z" fill="#f08a1c" stroke="#c85a10" stroke-width="0.5"/></svg>
<div class="abs" style="left:617px;top:613px;width:1px;height:12px;background:#c4c4c4"></div>
<div class="abs" style="left:630px;top:613px;width:1px;height:12px;background:#c4c4c4"></div>
<div class="t pg" style="left:766.5px;top:614.6px;letter-spacing:-0.3px;color:#222">cm,daN,deg,°C,s</div>
</body></html>
